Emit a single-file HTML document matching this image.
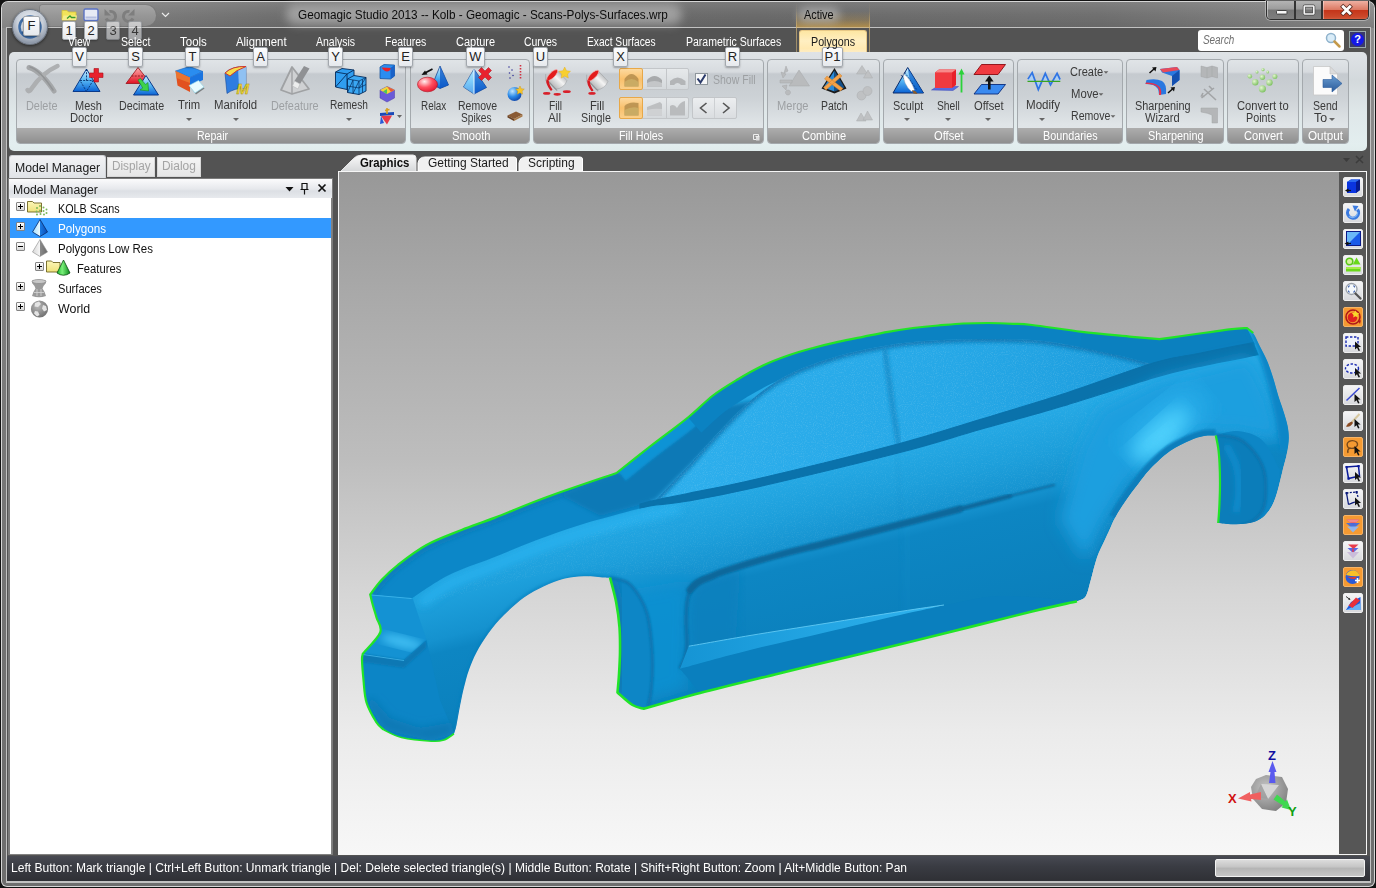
<!DOCTYPE html>
<html><head><meta charset="utf-8"><title>Geomagic Studio 2013</title>
<style>
*{box-sizing:border-box;margin:0;padding:0}
html,body{width:1376px;height:888px;overflow:hidden}
body{position:relative;background:#555;font-family:"Liberation Sans",sans-serif;font-size:12px;color:#222}
.a{position:absolute}
.t{position:absolute;white-space:nowrap;font-size:12px;line-height:14px;height:14px;transform-origin:0 50%}
svg{position:absolute;overflow:visible}
#title{left:298px;top:8px;font-size:12px;line-height:15px;color:#111;white-space:nowrap;letter-spacing:-0.12px}
.menu{top:35px;height:14px;line-height:14px;color:#fff;font-size:12px;white-space:nowrap;letter-spacing:-0.6px;text-align:center;transform:translateX(-50%)}
.grp{top:59px;height:85px;border-radius:4px;border:1px solid #a4a9ad;background:linear-gradient(#e0e4e7 0,#d7dbdf 12px,#c5cacf 14px,#cdd2d6 38px,#dfe4e7 64px,#e5eaec 100%);overflow:hidden}
.gt{position:absolute;left:0;right:0;bottom:0;height:15px;background:linear-gradient(#adadad,#8f8f8f);color:#fff;font-size:12px;text-align:center;line-height:16px;letter-spacing:-0.55px}
.lbl{font-size:11.5px;color:#3c3c3c;text-align:center;white-space:nowrap;line-height:12px;letter-spacing:-0.45px;transform:translateX(-50%)}
.dis{color:#9b9ea1}
.kt{background:linear-gradient(#fdfdfe,#e6e9ed);border:1px solid #a3a8ae;border-radius:2px;color:#222;font-size:13px;text-align:center;line-height:17px;height:20px;width:15px;box-shadow:0 1px 2px rgba(0,0,0,.3)}
.dd{width:0;height:0;border-left:3px solid transparent;border-right:3px solid transparent;border-top:3px solid #666}
.tb{left:1343px;width:20px;height:20px;border-radius:2px;background:linear-gradient(#f4f4f6,#d8d9dd);border:1px solid #eee}
.tb.on{background:#f59a32;border-color:#f7b466}
.tr{left:10px;width:321px;height:20px}
.tr span{position:absolute;top:3px;font-size:12px;letter-spacing:-0.3px;white-space:nowrap;color:#111}
.pm{width:9px;height:9px;border:1px solid #848484;background:linear-gradient(#fff,#d8d8d8);border-radius:1px}
.pm:before{content:"";position:absolute;left:1px;top:3px;width:5px;height:1px;background:#000}
.pm.p:after{content:"";position:absolute;left:3px;top:1px;width:1px;height:5px;background:#000}
</style></head><body>
<!-- window frame -->
<div class="a" style="left:0;top:0;width:1376px;height:888px;background:#121212"></div>
<div class="a" style="left:.8px;top:1.300px;width:1374.400px;height:885.900px;background:#d6d6d6;border-radius:7px 7px 6px 6px"></div>
<div class="a" style="left:2px;top:2.300px;width:1372px;height:883.700px;background:linear-gradient(#8e8e8e 0,#888 150px,#787878 420px,#6e6e6e 800px,#6e6e6e 100%);border-radius:6px 6px 5px 5px"></div>
<!-- title bar -->
<div class="a" style="left:2px;top:2.300px;width:1372px;height:25.700px;border-radius:6px 6px 0 0;background:linear-gradient(90deg,#8e8e8e 0,#7c7c7c 140px,#6e6e6e 300px,#6b6b6b 55%,#707070 80%,#888 100%)"></div>
<div class="a" style="left:2px;top:2.300px;width:1372px;height:25.700px;border-radius:6px 6px 0 0;background:linear-gradient(rgba(255,255,255,.10),rgba(255,255,255,0) 50%,rgba(0,0,0,.08))"></div>
<div class="a" style="left:5.800px;top:27px;width:1365.100px;height:855.500px;background:#c2c2c2"></div>
<div class="a" style="left:6.800px;top:28px;width:1362.900px;height:853.300px;background:#535353"></div>
<!-- title glow -->
<div class="a" style="left:286px;top:4px;width:396px;height:21px;border-radius:10px;background:rgba(200,200,200,.55);filter:blur(5px)"></div>
<!-- quick access toolbar -->
<div class="a" style="left:40px;top:5px;width:116px;height:21px;border-radius:3px 11px 11px 3px;background:linear-gradient(#a6a6a6,#979797 50%,#8b8b8b);box-shadow:0 0 0 1px rgba(120,120,120,.6)"></div>
<!-- QAT icons -->
<svg class="a" style="left:60px;top:6px" width="80" height="20" viewBox="0 0 80 20">
 <path d="M2 4.500h5l1.500 1.500h7.500v8h-14z" fill="#f3e45a" stroke="#d4c23a" stroke-width=".8"/><path d="M2 14l1.500-4.500h13.500l-1 4.500z" fill="#f8ee8a"/><path d="M7 12.500l3-2.500l1.500 1.500h4" fill="none" stroke="#3a9a2a" stroke-width="1.300"/>
 <rect x="24" y="3" width="14" height="11.500" rx="1.500" fill="#e6eaf5" stroke="#5a72c4" stroke-width="1.400"/><rect x="25.500" y="10.500" width="11" height="2" fill="#b4bee0"/>
 <path d="M49.500 5.500a5 5 0 1 1-3.500 7" fill="none" stroke="#7e7e7e" stroke-width="3"/><path d="M44.500 3v6.500h6.500z" fill="#7e7e7e"/>
 <path d="M69.500 5.500a5 5 0 1 0 3.500 7" fill="none" stroke="#7e7e7e" stroke-width="3"/><path d="M74.500 3v6.500h-6.500z" fill="#7e7e7e"/>
</svg>
<svg class="a" style="left:161px;top:12px" width="9" height="6"><path d="M1 1l3.500 3.500L8 1" fill="none" stroke="#ececec" stroke-width="1.200"/></svg>
<!-- app orb -->
<div class="a" style="left:12px;top:9px;width:36px;height:36px;border-radius:50%;background:radial-gradient(circle at 50% 35%,#f4f6f9 0,#c9d0da 45%,#8e98a8 75%,#b9c3d2 100%);border:1px solid #6c7480;box-shadow:0 1px 3px rgba(0,0,0,.5)"></div>
<svg class="a" style="left:15px;top:12px" width="30" height="30" viewBox="0 0 30 30"><circle cx="15" cy="15" r="10.5" fill="none" stroke="#3f6da6" stroke-width="2.5"/><path d="M7 20q8 7 16 0" fill="none" stroke="#2f5d96" stroke-width="2.5"/><circle cx="15" cy="14" r="7" fill="#dfe6ef"/></svg>
<div class="a kt" style="left:23px;top:15.500px;width:17px;height:20px">F</div>
<div class="a kt" style="left:62px;top:21px;width:14px;height:19px">1</div>
<div class="a kt" style="left:84px;top:21px;width:14px;height:19px">2</div>
<div class="a kt" style="left:106px;top:21px;width:14px;height:19px;opacity:.55">3</div>
<div class="a kt" style="left:128px;top:21px;width:14px;height:19px;opacity:.55">4</div>
<!-- window buttons -->
<div class="a" style="left:1266px;top:1px;width:103px;height:19px;border-radius:0 0 5px 5px;border:1px solid #2e2e2e;border-top:none;background:linear-gradient(#b4b4b4 0,#9c9c9c 45%,#757575 50%,#7e7e7e 100%);overflow:hidden;box-shadow:0 0 0 1px rgba(255,255,255,.35)">
 <div class="a" style="left:0;top:0;width:101px;height:19px;border:1px solid rgba(255,255,255,.45);border-top:none;border-radius:0 0 4px 4px"></div>
 <div class="a" style="left:27px;top:0;width:1.500px;height:20px;background:#333"></div>
 <div class="a" style="left:54px;top:0;width:1.500px;height:20px;background:#333"></div>
 <div class="a" style="left:55.500px;top:0;width:47px;height:20px;background:linear-gradient(#eeb0a2 0,#dc7a64 45%,#c5351a 50%,#cc4a2c 85%,#d8684a 100%);border:1px solid rgba(255,255,255,.4);border-top:none"></div>
 <svg class="a" style="left:0;top:0" width="103" height="20" viewBox="0 0 103 20">
  <rect x="9.500" y="9.500" width="10.500" height="3.600" rx=".8" fill="#f6f6f6" stroke="#444" stroke-width="1"/>
  <rect x="37.300" y="5" width="9.500" height="8" rx=".6" fill="none" stroke="#444" stroke-width="3"/><rect x="37.300" y="5" width="9.500" height="8" rx=".6" fill="none" stroke="#f6f6f6" stroke-width="1.700"/>
  <path d="M76.200 5.800L82.800 12.200M82.800 5.800L76.200 12.200" stroke="#5a2a20" stroke-width="4.400" stroke-linecap="square"/><path d="M76.200 5.800L82.800 12.200M82.800 5.800L76.200 12.200" stroke="#fff" stroke-width="2.800" stroke-linecap="square"/>
 </svg>
</div>
<!-- search -->
<div class="a" style="left:1198px;top:30px;width:146px;height:21px;background:#fff;border-radius:3px"></div>
<svg class="a" style="left:1324px;top:31px" width="18" height="18" viewBox="0 0 18 18"><circle cx="7" cy="7" r="4.5" fill="#d9ecf8" stroke="#8fb2cc" stroke-width="1.5"/><path d="M10.5 10.5l5 5" stroke="#c59a4a" stroke-width="2.5" stroke-linecap="round"/></svg>
<div class="a" style="left:1349px;top:31px;width:17px;height:17px;border:1px solid #9aa;background:#3a3a6a"></div>
<div class="a" style="left:1351px;top:33px;width:13px;height:13px;border-radius:50%;background:#1418e8;color:#fff;font-weight:bold;font-size:11px;line-height:13px;text-align:center">?</div>
<!-- menus -->
<!-- contextual tab -->
<div class="a" style="left:796px;top:2px;width:74px;height:50px;background:linear-gradient(rgba(0,0,0,0) 0,rgba(0,0,0,0) 9px,rgba(214,160,60,.25) 18px,rgba(222,166,60,.6) 25px,rgba(0,0,0,0) 26.500px)"></div>
<div class="a" style="left:796px;top:2px;width:1px;height:50px;background:linear-gradient(rgba(210,180,120,0) 0,rgba(210,180,120,.15) 10px,rgba(210,180,120,.7) 26px,rgba(210,180,120,.55) 100%)"></div>
<div class="a" style="left:869px;top:2px;width:1px;height:50px;background:linear-gradient(rgba(210,180,120,0) 0,rgba(210,180,120,.15) 10px,rgba(210,180,120,.7) 26px,rgba(210,180,120,.55) 100%)"></div>
<div class="a" style="left:798px;top:7px;width:42px;height:16px;border-radius:8px;background:rgba(200,200,200,.55);filter:blur(4px)"></div>
<div class="a" style="left:799px;top:30px;width:68px;height:23px;border-radius:3px 3px 0 0;background:linear-gradient(#fde6a2,#ffefc2 45%,#ffe9b2 80%,#fdeec8);border:1px solid #e8c987;border-bottom:none"></div>
<!-- ribbon -->
<div class="a" style="left:9px;top:52px;width:1358px;height:99px;border-radius:5px;background:linear-gradient(#dfe3e6 0,#dce0e4 8px,#d3d9dc 28px,#dfe7e9 60px,#e3eeef 92px,#e0ecec 100%)"></div>
<div class="a grp" style="left:16px;width:390px"><div class="gt"></div></div>
<div class="a grp" style="left:410px;width:120px"><div class="gt"></div></div>
<div class="a grp" style="left:533px;width:231px"><div class="gt"></div></div>
<div class="a grp" style="left:767px;width:113px"><div class="gt"></div></div>
<div class="a grp" style="left:883px;width:131px"><div class="gt"></div></div>
<div class="a grp" style="left:1017px;width:106px"><div class="gt"></div></div>
<div class="a grp" style="left:1126px;width:98px"><div class="gt"></div></div>
<div class="a grp" style="left:1227px;width:72px"><div class="gt"></div></div>
<div class="a grp" style="left:1302px;width:47px"><div class="gt"></div></div>
<!-- labels -->



<div class="a dd" style="left:186px;top:118px"></div>
<div class="a dd" style="left:233px;top:118px"></div>

<div class="a dd" style="left:346px;top:118px"></div>







<div class="a dd" style="left:904px;top:118px"></div>
<div class="a dd" style="left:945px;top:118px"></div>
<div class="a dd" style="left:985px;top:118px"></div>
<div class="a dd" style="left:1039px;top:118px"></div>
<div class="a dd" style="left:1103px;top:71px;transform:scale(.8)"></div>
<div class="a dd" style="left:1098px;top:93px;transform:scale(.8)"></div>
<div class="a dd" style="left:1110px;top:115px;transform:scale(.8)"></div>


<div class="a dd" style="left:1329px;top:118px"></div>
<!-- fill-holes toggles -->
<div class="a" style="left:619px;top:68px;width:70px;height:22px;border:1px solid #c3c6c9;border-radius:2px;background:linear-gradient(#e6e9eb,#d5d9dc)"></div>
<div class="a" style="left:619px;top:68px;width:24px;height:22px;border:1px solid #e8a848;border-radius:2px;background:linear-gradient(#fcd9a0,#f9c06c 50%,#fbd08a)"></div>
<div class="a" style="left:666px;top:69px;width:1px;height:20px;background:#c3c6c9"></div>
<div class="a" style="left:619px;top:97px;width:70px;height:22px;border:1px solid #c3c6c9;border-radius:2px;background:linear-gradient(#e6e9eb,#d5d9dc)"></div>
<div class="a" style="left:619px;top:97px;width:24px;height:22px;border:1px solid #e8a848;border-radius:2px;background:linear-gradient(#fcd9a0,#f9c06c 50%,#fbd08a)"></div>
<div class="a" style="left:666px;top:98px;width:1px;height:20px;background:#c3c6c9"></div>
<div class="a" style="left:692px;top:97px;width:45px;height:22px;border:1px solid #c3c6c9;border-radius:2px;background:linear-gradient(#eceef0,#dadde0)"></div>
<div class="a" style="left:714px;top:98px;width:1px;height:20px;background:#cdd0d3"></div>
<div class="a" style="left:695px;top:73px;width:13px;height:12px;border:1px solid #8e969c;background:#f6f7f8"></div>
<svg class="a" style="left:0;top:0" width="1376" height="152" viewBox="0 0 1376 152">
<defs>
<linearGradient id="bt" x1="0" y1="0" x2="0" y2="1"><stop offset="0" stop-color="#d4f0ff"/><stop offset=".5" stop-color="#58b8f4"/><stop offset="1" stop-color="#0a62d4"/></linearGradient>
<linearGradient id="rd" x1="0" y1="0" x2="0" y2="1"><stop offset="0" stop-color="#ffb0b0"/><stop offset="1" stop-color="#e01020"/></linearGradient>
<linearGradient id="gy" x1="0" y1="0" x2="0" y2="1"><stop offset="0" stop-color="#d0d2d4"/><stop offset="1" stop-color="#a2a5a8"/></linearGradient>
<linearGradient id="bk" x1="0" y1="1" x2="1" y2="0"><stop offset="0" stop-color="#8e9092"/><stop offset=".22" stop-color="#b4b6b8"/><stop offset=".55" stop-color="#f4f4f4"/><stop offset=".8" stop-color="#b0b2b4"/><stop offset="1" stop-color="#7e8082"/></linearGradient>
<radialGradient id="gd" cx=".35" cy=".35" r=".7"><stop offset="0" stop-color="#e4f6d0"/><stop offset="1" stop-color="#7cc060"/></radialGradient>
<radialGradient id="rdr" cx=".35" cy=".3" r=".8"><stop offset="0" stop-color="#fff0f0"/><stop offset=".5" stop-color="#ff5060"/><stop offset="1" stop-color="#e0102a"/></radialGradient>
<radialGradient id="bsph" cx=".35" cy=".3" r=".8"><stop offset="0" stop-color="#bfe6ff"/><stop offset=".5" stop-color="#2a8ae8"/><stop offset="1" stop-color="#0a3aa0"/></radialGradient>
<linearGradient id="arb" x1="0" y1="0" x2="0" y2="1"><stop offset="0" stop-color="#6a9ed2"/><stop offset="1" stop-color="#2a5a9a"/></linearGradient>
</defs>
<!-- Delete -->
<g fill="none" stroke-linecap="round" opacity=".95">
<path d="M29 67.500Q41 71 54 91" stroke="#a3a5a7" stroke-width="5"/>
<path d="M57.500 66Q42 73 32 88Q29 93 27.500 90" stroke="#acaeb0" stroke-width="4.500"/>
<path d="M30 67Q40 70 53 90" stroke="#8f9193" stroke-width="1.500"/>
</g>
<!-- Mesh Doctor -->
<path d="M86.500 69L100 91.500L73 91.500Z" fill="url(#bt)" stroke="#0a3a8a" stroke-width="1"/>
<path d="M80 80.500L93 80.500L86.500 91.500ZM86.500 69L86.500 80.500" fill="none" stroke="#08306e" stroke-width=".9" stroke-dasharray="2 1.2"/>
<path d="M94 68.500h4.500v4.500h4.500v4.500h-4.500v4.500h-4.500v-4.500h-4.500v-4.500h4.500z" fill="#e8212e" stroke="#a80f18" stroke-width=".6"/>
<!-- Decimate -->
<path d="M138 67.500L150.500 83.500L126 83.500Z" fill="url(#rd)" stroke="#9a1018" stroke-width=".8"/>
<path d="M131.500 76h13" stroke="#7a0a10" stroke-width=".8" stroke-dasharray="2 1.200"/>
<path d="M146 75.500L158.500 95L133.500 95Z" fill="url(#bt)" stroke="#0a3a8a" stroke-width="1"/>
<path d="M138 80l2.500-1.500l5 6l2.500-2l.5 8.500l-8.500-1l2.700-2z" fill="#3ed24a" stroke="#1c8a26" stroke-width=".6"/>
<!-- Trim -->
<path d="M175.500 71L189.500 66.500L203 71.500L190 77.500Z" fill="#2a8df0" stroke="#1560b8" stroke-width=".6"/>
<path d="M175.500 71L190 77.500L190 92L177.500 85.500Z" fill="#e2511f"/>
<path d="M175.500 71L190 77.500L190 83L176.500 78Z" fill="#f08a3a" opacity=".6"/>
<path d="M190 77.500L203 71.500L203 80L190 86Z" fill="#1a74e0"/>
<path d="M190 86L199 81.500L204.500 88.500L196 94.500Z" fill="#3a3a3a" opacity=".55"/>
<path d="M189 85.500L198.500 80.500L204 87L195 93Z" fill="#e8fbff" stroke="#8fd6ea" stroke-width=".6"/>
<!-- Manifold -->
<path d="M225 73Q232 66 246 66.500L246 88Q234 88 227 93.500Z" fill="#2f7de0" stroke="#164a9a" stroke-width=".6"/>
<path d="M238 67L246 66.500L246 88L239 88.500Z" fill="#a9d2f6" opacity=".8"/>
<path d="M225 73Q232 66 246 66.500Q236 70 230 76Z" fill="#f7dc4a" stroke="#d63a2a" stroke-width="1"/>
<text x="236.500" y="94" font-family="Liberation Sans,sans-serif" font-size="15" font-weight="bold" font-style="italic" fill="#f2dc3a" stroke="#a58a10" stroke-width=".5">M</text>
<!-- Defeature -->
<path d="M292 67L281 90L292 94L309 89Z" fill="#cfd1d3" stroke="#a0a2a4" stroke-width="1.800" stroke-linejoin="round"/>
<path d="M292 67L292 94" stroke="#a0a2a4" stroke-width="1.400"/>
<path d="M304 66L309.500 68.500L300 84L294.500 81Z" fill="#8f9194"/>
<path d="M294.500 81L300 84L298 89L292.500 86Z" fill="#eceded" stroke="#b5b7b9" stroke-width=".6"/>
<!-- Remesh -->
<g stroke="#052a5a" stroke-width=".9" fill="#2f9df0">
<path d="M335.500 72L342 68.500L354 70L354 86L347 89.500L335.500 87Z"/>
<path d="M335.500 72L347 74L354 70M347 74L347 89.500M335.500 87L347 74" fill="none"/>
<path d="M347.500 79L354 75.500L366 77.500L366 91L359 94.500L347.500 92.500Z" fill="#3aa8f4"/>
<path d="M347.500 79L359 81L366 77.500M359 81L359 94.500M347.500 86L359 88L366 84.500M353 80L353 93.500M362.500 79.500L362.500 92.800M347.500 92.500L353 80M353 93.500L359 81M359 88L366 77.500" fill="none" stroke-width=".7"/>
</g>
<!-- Repair small icons -->
<path d="M380 67L384 64.500L394.500 65L394.500 76L390.500 79L380 78.500Z" fill="#2a8df0" stroke="#0c4a9a" stroke-width=".7"/>
<path d="M381.500 67.500L392 68Q387 75 381.500 67.500Z" fill="#e8202a"/>
<path d="M390.500 68L394.500 65L394.500 76L390.500 79Z" fill="#1a62c8"/>
<path d="M380 90L387 86.500L394.500 90L394.500 98L387 102L380 98Z" fill="#6a5ad8" stroke="#4a3aa8" stroke-width=".5"/>
<path d="M387 86.500L394.500 90L387 94L380 90Z" fill="#f4d23a"/><path d="M387 86.500L394.500 90L391 92Z" fill="#e85a3a"/><path d="M383 91.500L387 94L387 89Z" fill="#4ac85a"/>
<path d="M380 113L394 112L394 115L380 116Z" fill="#1a4ab8"/><path d="M381 116L392 115.500L387 124.500Z" fill="#e83a4a"/><path d="M381 116L384 123L380 124Z" fill="#2a5ad8"/>
<path d="M387 108L387 114M385 110.500L389.500 109.500" stroke="#d6a020" stroke-width="1.600"/><path d="M397 115h5l-2.500 3z" fill="#666"/>
<!-- Relax -->
<path d="M440 66L448.500 85L440 88.500L432.500 84.500Z" fill="url(#bt)" stroke="#0a3a8a" stroke-width=".7"/>
<path d="M440 66L440 88.500L448.500 85Z" fill="#0d55c4" opacity=".75"/>
<ellipse cx="427.500" cy="84.500" rx="10" ry="7.300" fill="url(#rdr)" stroke="#b01020" stroke-width=".6"/>
<path d="M432.500 69L424 73.500" stroke="#111" stroke-width="1.800"/><path d="M421.500 75L427.500 74.500L425 70.500Z" fill="#111"/>
<!-- Remove spikes -->
<path d="M474 69L486.500 87.500L474 94L463.500 87Z" fill="url(#bt)" stroke="#0a3a8a" stroke-width=".7"/>
<path d="M474 69L474 94L463.500 87Z" fill="#9adcff" opacity=".55"/><path d="M474 69L486.500 87.500L474 94Z" fill="#0d55c4" opacity=".65"/><path d="M474 69L474 94" stroke="#e8f8ff" stroke-width="1"/>
<path d="M480 70l3-3l3.500 3.500l3.500-3.500l3 3l-3.500 3.500l3.500 3.500l-3 3l-3.500-3.500l-3.500 3.500l-3-3l3.500-3.500z" fill="#e8212e" stroke="#a80f18" stroke-width=".5" transform="translate(-1.500 .5)"/>
<!-- Smooth small icons -->
<g fill="#3a3a9a"><circle cx="509" cy="67" r=".8"/><circle cx="512" cy="70" r=".8"/><circle cx="509.500" cy="73" r=".8"/><circle cx="513" cy="75.500" r=".8"/><circle cx="510" cy="78" r=".8"/></g>
<path d="M520.500 65v14" stroke="#d03040" stroke-width="1.600" stroke-dasharray="1.600 1.400"/>
<circle cx="514.500" cy="94" r="7" fill="url(#bsph)"/><path d="M520 86l1.300 2.700l3 .4l-2.200 2.100l.5 3l-2.600-1.400l-2.700 1.400l.5-3l-2.100-2.100l2.900-.4z" fill="#f5c52a" stroke="#c8901a" stroke-width=".4"/>
<path d="M507.500 115.500L516 111.500L522.500 114.500L514 119Z" fill="#8a5a34"/><path d="M507.500 115.500L514 119L514 121L507.500 117.500Z" fill="#6a4224"/><path d="M514 119L522.500 114.500L522.500 116.500L514 121Z" fill="#a87a4a"/>
<!-- Fill All -->
<g transform="translate(552.2 75.1)">
<path d="M-5.500 4.900L3.200 14.200Q11.500 13.500 14.800 5.600L4.900 -4.900Z" fill="url(#bk)" stroke="#8e9092" stroke-width=".4"/>
<path d="M-3.500 6.500L5 15.500" stroke="#6e7072" stroke-width="1.200" opacity=".5"/>
<ellipse cx="0" cy="0" rx="7.300" ry="2.700" transform="rotate(-45)" fill="#e31c1c" stroke="#f4b0b0" stroke-width=".7"/>
<path d="M-5.800 4.300Q-7 8 -1.800 15.500Q0 15.800 .3 14.500Q-3.500 9 -3.300 5.500Z" fill="#d41a22"/>
<path d="M-6.500 -1L-6.500 6" stroke="#9a9c9e" stroke-width=".6"/>
</g>
<ellipse cx="546.700" cy="93.400" rx="3.700" ry="1.400" fill="#d8202a"/><ellipse cx="557.200" cy="94.300" rx="3.700" ry="1.400" fill="#d8202a"/><ellipse cx="566.800" cy="91.700" rx="4" ry="1.400" fill="#d8202a"/>
<path d="M564.700 67l1.800 3.700l4 .6l-2.900 2.800l.7 4l-3.600-1.900l-3.600 1.900l.7-4l-2.900-2.800l4-.6z" fill="#f8cf2e" stroke="#e0a81a" stroke-width=".4"/>
<g transform="translate(593.2 75.7)">
<path d="M-5.500 4.900L3.200 14.200Q11.500 13.500 14.800 5.600L4.900 -4.900Z" fill="url(#bk)" stroke="#8e9092" stroke-width=".4"/>
<path d="M-3.500 6.500L5 15.500" stroke="#6e7072" stroke-width="1.200" opacity=".5"/>
<ellipse cx="0" cy="0" rx="7.300" ry="2.700" transform="rotate(-45)" fill="#e31c1c" stroke="#f4b0b0" stroke-width=".7"/>
<path d="M-5.800 4.300Q-7 8 -1.800 15.500Q0 15.800 .3 14.500Q-3.500 9 -3.300 5.500Z" fill="#d41a22"/>
<path d="M-6.500 -1L-6.500 6" stroke="#9a9c9e" stroke-width=".6"/>
</g>
<ellipse cx="592" cy="93.400" rx="3.700" ry="1.400" fill="#d8202a"/>
<!-- toggle icons -->
<path d="M624.500 86.500V79Q631.500 69 638.500 79V86.500Z" fill="#b08a4a" opacity=".8"/><path d="M624.500 86.500V82Q631.500 76 638.500 82V86.500Z" fill="#cdb068" opacity=".8"/>
<path d="M647 86.500V80Q654.500 72 662 80V86.500Z" fill="#a8aaac"/><path d="M647 86.500V83Q654.500 79 662 83V86.500Z" fill="#c4c6c8"/>
<path d="M670 85V81Q677.500 74 685.500 81V85H681Q677.500 81 674 85Z" fill="#b3b5b7"/>
<path d="M624.500 115.500V106Q629 101 638.500 103V115.500Z" fill="#b08a4a" opacity=".8"/><path d="M624.500 115.500V110Q632 106 638.500 108V115.500Z" fill="#cdb068" opacity=".8"/>
<path d="M647 115.500V107L660 102L662 104V115.500Z" fill="#bdbfc1"/><path d="M647 115.500V110Q654 108 662 109V115.500Z" fill="#cfd1d3"/>
<path d="M670 115.500V106Q674 103 677 108Q680 102 685 101V115.500Z" fill="#b9bbbd"/>
<path d="M697.500 78.500L700.500 82.500L705.500 74.500" fill="none" stroke="#2a3a6a" stroke-width="2"/>
<path d="M706.500 103L700.500 108L706.500 113" fill="none" stroke="#555" stroke-width="1.600"/><path d="M723 103L729 108L723 113" fill="none" stroke="#555" stroke-width="1.600"/>
<path d="M753.500 134.500h5v5h-5zM755.500 136.500h4" fill="none" stroke="#eee" stroke-width="1"/><path d="M756 137h3.500v3.500h-3.500z" fill="#ddd"/>
<!-- Merge (gray) -->
<g fill="#b9bbbd" stroke="#a6a8aa" stroke-width=".5"><path d="M799 70L809.500 86L789 86Z"/><path d="M780 80h12v3h-12z"/><path d="M786 66l2 5l-4 2zM781 72l5 2l-3 4zM782 86l5-1l-1 5zM788 90a2.500 2.500 0 1 1-.1 0"/></g>
<!-- Patch -->
<path d="M834.500 68L846.500 88.500L834.500 93.500L821.500 88.500Z" fill="#1a1a1a"/>
<path d="M834.500 70.500L834.500 91.500L823.500 87.500Z" fill="#2a8ad8"/><path d="M834.500 70.500L844.500 87.500L834.500 91.500Z" fill="#14508a"/>
<path d="M827 76L843 88.500L840.500 91L824.500 79ZM842 76L826 90L823.500 87.500L839.500 73.500Z" fill="#f4a24a" stroke="#c87820" stroke-width=".4"/>
<!-- Combine small gray -->
<g fill="#bfc1c3" stroke="#aaacae" stroke-width=".5"><path d="M862 65.500L867.500 74L856.500 74Z"/><path d="M868 70L872.500 78L863.500 78Z"/><circle cx="861.500" cy="95.500" r="4.500"/><circle cx="867.500" cy="91" r="4.500"/><path d="M861 113L866 121L856.500 121Z"/><path d="M867.500 111L872.500 120L863 120Z"/></g>
<!-- Sculpt -->
<path d="M907.700 67.500L923.500 93L893 93Z" fill="url(#bt)" stroke="#0a2a6a" stroke-width="1"/>
<path d="M907.700 67.500L923.500 93L912 93Z" fill="#0d60c8" opacity=".7"/>
<path d="M901 75L913 91M904.500 72L917 90" stroke="#0a2a6a" stroke-width=".7" stroke-dasharray="2 1.200" fill="none"/>
<path d="M903.500 74Q910 78 914.500 90L911.500 91.500Q903 84 903.500 74Z" fill="#fff" stroke="#99a" stroke-width=".4"/><path d="M912 90l4 1.500l1.500 2.500l-4-.5z" fill="#8a5a2a"/>
<!-- Shell -->
<path d="M931.500 90L937 86.500L958.500 86.500L953 90.500Z" fill="#5a6ae0" stroke="#3a4ab8" stroke-width=".5"/>
<path d="M935 72.500L939 69.500L956 69.500L956 85L952 88L935 88Z" fill="#e8202a"/><path d="M935 72.500L952 72.500L952 88L935 88Z" fill="#f03a40"/><path d="M935 72.500L939 69.500L956 69.500L952 72.500Z" fill="#f88a8a"/>
<path d="M961.500 92.500V73" stroke="#2ad23a" stroke-width="1.800"/><path d="M958.500 74.500L961.500 68.500L964.500 74.500Z" fill="#2ad23a"/>
<!-- Offset -->
<path d="M981.500 64.500L1005.500 64.500L998 74.500L974 74.500Z" fill="#f03a40" stroke="#8a0a10" stroke-width=".9"/>
<path d="M981.500 84.500L1005.500 84.500L998 94L974 94Z" fill="#3a8af0" stroke="#0a2a7a" stroke-width=".9"/>
<path d="M989.300 89.500V80" stroke="#111" stroke-width="2.600"/><path d="M985 81.500L989.300 75.500L993.600 81.500Z" fill="#111"/>
<!-- Modify -->
<path d="M1027.900 79.100L1032.200 72.600L1038.300 89.600L1045.300 73.400L1050.500 84.800L1057.100 73.400L1060.100 79.500L1060.100 81.300L1027.900 81.300Z" fill="#a8d0fa" opacity=".8"/>
<path d="M1027.900 79.100L1032.200 72.600L1038.300 89.600L1045.300 73.400L1050.500 84.800L1057.100 73.400L1060.100 79.500" fill="none" stroke="#2f74e4" stroke-width="1.700" stroke-linejoin="miter"/>
<path d="M1027.500 81.300h32.800" stroke="#3aa41e" stroke-width="1.300"/>
<!-- Sharpening wizard -->
<path d="M1160 69L1177 67L1179.500 70L1179.500 80L1172 86L1172 76L1162 72.500Z" fill="#2a78e0"/><path d="M1160 69L1177 67L1179.500 70L1163 72.500Z" fill="#e84a5a"/><path d="M1172 76L1179.500 70L1179.500 80L1172 86Z" fill="#1450b0"/>
<path d="M1146.500 80Q1156 78 1162 81Q1167 84 1166 94L1159 95Q1159 87 1153 85Q1149 84 1145.500 84Z" fill="#2a78e0"/><path d="M1145.500 84Q1153 83.500 1157 86.500Q1160 89 1159 95L1161 95Q1162 88 1158 85.500Q1154 82.500 1146 82.500Z" fill="#e8304a"/>
<path d="M1149.500 73L1154 69" stroke="#111" stroke-width="1.500"/><path d="M1152 67.500L1156.500 67L1155.500 71.500Z" fill="#111"/>
<path d="M1168 93L1172.500 89" stroke="#111" stroke-width="1.500"/><path d="M1170.500 87.500L1175 87L1174 91.500Z" fill="#111"/>
<!-- Sharpening small gray -->
<g fill="#b4b6b8" stroke="#a2a4a6" stroke-width=".5"><path d="M1201 66L1207 67.500L1212 66L1217.500 67.500L1217.500 78L1212 76.500L1207 78L1201 76.500Z"/><path d="M1207 67.500V78M1212 66V76.500" fill="none"/>
<path d="M1201.500 98L1214 88M1204 89L1216 100M1209 86l3 3M1203 93l-1.500 3l3 .5" fill="none" stroke-width="1.600"/>
<path d="M1201 108L1217.500 108L1217.500 123L1212 123L1212 115Q1208 113 1201 112Z"/></g>
<!-- Convert to points -->
<g fill="url(#gd)"><circle cx="1249.800" cy="76.300" r="2.300"/><circle cx="1262.400" cy="77.200" r="2.700"/><circle cx="1274.900" cy="76.500" r="2.500"/><circle cx="1255.200" cy="82.200" r="3.200"/><circle cx="1269.500" cy="82.500" r="3.200"/><circle cx="1262.400" cy="88.800" r="3.600"/><circle cx="1257" cy="72.100" r="1.500"/><circle cx="1263" cy="69.700" r="1.600"/><circle cx="1267.700" cy="72.100" r="1.500"/></g>
<!-- Send To -->
<path d="M1313.500 66.500L1330 66.500L1337.500 74L1337.500 95L1313.500 95Z" fill="#fbfbfb" stroke="#c8c8c8" stroke-width=".8"/><path d="M1330 66.500L1330 74L1337.500 74Z" fill="#dcdcdc" stroke="#c0c0c0" stroke-width=".6"/>
<path d="M1323 79.500L1332 79.500L1332 75L1342 83.500L1332 92L1332 87.500L1323 87.500Z" fill="url(#arb)" stroke="#2a5a9a" stroke-width=".6"/>

</svg>
<!-- keytips -->
<div class="a kt" style="left:72px;top:47px">V</div>
<div class="a kt" style="left:128px;top:47px">S</div>
<div class="a kt" style="left:185px;top:47px">T</div>
<div class="a kt" style="left:253px;top:47px">A</div>
<div class="a kt" style="left:328px;top:47px">Y</div>
<div class="a kt" style="left:398px;top:47px">E</div>
<div class="a kt" style="left:466px;top:47px;width:19px">W</div>
<div class="a kt" style="left:533px;top:47px">U</div>
<div class="a kt" style="left:613px;top:47px">X</div>
<div class="a kt" style="left:725px;top:47px">R</div>
<div class="a kt" style="left:822px;top:47px;width:21px">P1</div>
<!-- left panel tabs -->
<div class="a" style="left:9px;top:155px;width:97px;height:24px;border-radius:3px 3px 0 0;background:linear-gradient(#f2f3f5,#dfe2e6);border:1px solid #cfd2d6;border-bottom:none"></div>
<div class="a" style="left:107px;top:157px;width:48px;height:20px;border:1px solid #d8d8d8;background:linear-gradient(#f4f4f4,#e6e6e6)"></div>
<div class="a" style="left:157px;top:157px;width:44px;height:20px;border:1px solid #d8d8d8;background:linear-gradient(#f4f4f4,#e6e6e6)"></div>
<!-- model manager -->
<div class="a" style="left:8px;top:178px;width:325px;height:677px;background:#7c7c7c"></div>
<div class="a" style="left:9px;top:179px;width:323px;height:20px;background:linear-gradient(#fbfbfc,#e6e8ec 50%,#dcdfe4 60%,#e9ebef)"></div>
<svg class="a" style="left:284px;top:182px" width="46" height="14" viewBox="0 0 46 14"><path d="M1.5 5h8l-4 4.5z" fill="#111"/><path d="M18 1.5h5v6h-5zM16.5 7.5h8M20.5 7.5v5" stroke="#111" stroke-width="1.2" fill="none"/><path d="M34.500 2.500l7 7m0-7l-7 7" stroke="#111" stroke-width="1.7"/></svg>
<div class="a" style="left:9.500px;top:197.500px;width:322px;height:657px;background:#828282"></div><div class="a" style="left:10.300px;top:198.300px;width:320.700px;height:655.700px;background:#fff"></div>
<div class="a" style="left:10px;top:218px;width:321px;height:20px;background:#3399ff"></div>
<div class="a tr" style="top:198px"><div class="a pm p" style="left:6px;top:4px"></div></div>
<div class="a tr" style="top:218px"><div class="a pm p" style="left:6px;top:4px"></div></div>
<div class="a tr" style="top:238px"><div class="a pm" style="left:6px;top:4px"></div></div>
<div class="a tr" style="top:258px"><div class="a pm p" style="left:25px;top:4px"></div></div>
<div class="a tr" style="top:278px"><div class="a pm p" style="left:6px;top:4px"></div></div>
<div class="a tr" style="top:298px"><div class="a pm p" style="left:6px;top:4px"></div></div>
<svg class="a" style="left:0;top:198px" width="340" height="130" viewBox="0 198 340 130">
<defs>
<linearGradient id="fy" x1="0" y1="0" x2="0" y2="1"><stop offset="0" stop-color="#fbf6b8"/><stop offset="1" stop-color="#efe27a"/></linearGradient>
<linearGradient id="pb" x1="0" y1="0" x2="1" y2="0"><stop offset="0" stop-color="#9fdcff"/><stop offset=".48" stop-color="#e8f8ff"/><stop offset=".52" stop-color="#1a7ae0"/><stop offset="1" stop-color="#0a4ab8"/></linearGradient>
<linearGradient id="pg" x1="0" y1="0" x2="1" y2="0"><stop offset="0" stop-color="#d8d8d8"/><stop offset=".48" stop-color="#f4f4f4"/><stop offset=".52" stop-color="#8a8a8a"/><stop offset="1" stop-color="#6a6a6a"/></linearGradient>
<linearGradient id="cg" x1="0" y1="0" x2="1" y2="0"><stop offset="0" stop-color="#1ab82a"/><stop offset=".4" stop-color="#7af07a"/><stop offset="1" stop-color="#0a8a1a"/></linearGradient>
<radialGradient id="wg" cx=".4" cy=".35" r=".7"><stop offset="0" stop-color="#b8b8b8"/><stop offset="1" stop-color="#6e6e6e"/></radialGradient>
</defs>
<!-- folder + dots -->
<path d="M27.500 201.500h5l1.500 1.500h7.500v9h-14z" fill="url(#fy)" stroke="#6e6420" stroke-width=".9"/>
<g fill="#7ab85a"><circle cx="37" cy="208" r="1"/><circle cx="40" cy="206" r="1"/><circle cx="43.500" cy="207.500" r="1"/><circle cx="36.500" cy="211.500" r="1"/><circle cx="40" cy="210.500" r="1"/><circle cx="43.500" cy="211" r="1"/><circle cx="37" cy="214.500" r="1"/><circle cx="40.500" cy="214" r="1"/><circle cx="44" cy="214.500" r="1"/><circle cx="46.500" cy="209.500" r="1"/><circle cx="46.500" cy="213" r="1"/></g>
<!-- blue pyramid -->
<path d="M40 219.500L47.500 232L40 236.500L32.500 232Z" fill="url(#pb)" stroke="#082a6a" stroke-width=".8"/>
<!-- gray pyramid -->
<path d="M40 239.500L47.500 252L40 256.500L32.500 252Z" fill="url(#pg)" stroke="#8a8a8a" stroke-width=".6"/>
<!-- folder + cone -->
<path d="M46.500 261h5l1.500 1.500h7v9.500h-13.500z" fill="url(#fy)" stroke="#6e6420" stroke-width=".9"/>
<path d="M63.500 260L70 273Q63.500 277.500 57 273Z" fill="url(#cg)" stroke="#064a0e" stroke-width=".8"/>
<!-- surfaces -->
<path d="M32 280.500Q39 278.500 46 280.500L46 283Q43 286 42.500 288.500Q44.500 291 46 296Q39 298.500 32 296Q33.500 291 35.500 288.500Q35 286 32 283Z" fill="#9a9a9a"/>
<ellipse cx="39" cy="281.500" rx="7" ry="2" fill="#c8c8c8" stroke="#7a7a7a" stroke-width=".5"/>
<path d="M34 292.500h10M37 289v7M41 289v7" stroke="#d8d8d8" stroke-width=".8"/>
<!-- world -->
<circle cx="39.500" cy="309" r="8.600" fill="url(#wg)"/>
<path d="M35 303l4-1.500l2 2.500l-3 3l-3.500-.5zM43 305l3 1l1 4l-3 1.500l-2-3zM35 311l3 .5l1.500 3.500l-2.500 1.500l-3-3z" fill="#e4e4e4"/>

</svg>
<!-- doc tabs -->
<svg class="a" style="left:338px;top:152px" width="260" height="22" viewBox="338 152 260 22">
<defs><linearGradient id="tg" x1="0" y1="0" x2="0" y2="1"><stop offset="0" stop-color="#fafafa"/><stop offset="1" stop-color="#d4d6d8"/></linearGradient></defs>
<path d="M340 172 L352 160 Q356 155 362 155 H413 Q416 155 416 158 V172z" fill="url(#tg)" stroke="#e8e8e8" stroke-width="1"/>
<path d="M418 171 V163 Q419 157 425 157 H514 Q516.500 157 516.500 159 V171z" fill="#f0f0f0" stroke="#fff" stroke-width="1"/>
<path d="M519 171 V163 Q520 157 526 157 H580 Q582.500 157 582.500 159 V171z" fill="#f0f0f0" stroke="#fff" stroke-width="1"/>
</svg>
<svg class="a" style="left:1342px;top:155px" width="24" height="10" viewBox="0 0 24 10"><path d="M1 3h7l-3.500 4z" fill="#3c3c3c"/><path d="M14 1l7 7m0-7l-7 7" stroke="#3c3c3c" stroke-width="1.5"/></svg>
<!-- graphics view -->
<div class="a" style="left:338px;top:171px;width:1029.400px;height:684.200px;background:#f6f6f6"></div>
<div class="a" style="left:339px;top:172px;width:1001px;height:681.700px;background:linear-gradient(#989898 0,#a9a9a9 18%,#bdbdbd 42%,#d6d6d6 62%,#ebebeb 82%,#f7f7f7 100%)"></div>
<div class="a" style="left:1339.400px;top:172px;width:26.500px;height:681.700px;background:#565656"></div>

<svg class="a" style="left:0;top:0" width="1376" height="888" viewBox="0 0 1376 888">
<defs>
<clipPath id="cb"><path d="M370.2 594.5C372.1 592.1 376.9 584.9 381.5 580.0C386.1 575.1 390.2 570.8 397.8 565.0C405.2 559.2 415.9 550.8 426.5 545.0C437.1 539.2 450.1 534.6 461.5 530.0C472.9 525.4 480.8 523.1 495.0 517.6C509.2 512.1 526.8 504.4 547.0 497.0C567.2 489.6 604.9 477.0 616.5 473.0C622.1 468.6 638.1 455.8 650.0 446.5C661.9 437.2 677.5 426.0 688.0 417.5C698.5 409.0 704.7 401.9 713.0 395.5C721.3 389.1 729.7 384.2 738.0 379.2C746.3 374.2 754.7 369.5 763.0 365.5C771.3 361.5 779.7 358.4 788.0 355.5C796.3 352.6 804.7 350.3 813.0 348.0C821.3 345.7 829.7 343.6 838.0 341.8C846.3 339.9 854.7 338.4 863.0 336.8C871.3 335.1 879.7 333.2 888.0 331.8C896.3 330.3 904.7 329.0 913.0 328.0C921.3 327.0 929.7 326.2 938.0 325.5C946.3 324.8 954.7 323.9 963.0 323.5C971.3 323.1 979.7 323.0 988.0 323.0C996.3 323.0 1005.7 323.4 1013.0 323.8C1020.3 324.1 1020.5 323.7 1032.0 325.0C1043.5 326.3 1065.3 329.8 1082.0 331.8C1098.7 333.7 1119.1 335.5 1132.0 336.8C1144.9 338.0 1154.9 338.8 1159.5 339.2C1163.2 338.7 1174.1 337.1 1182.0 336.0C1189.9 334.9 1198.7 333.6 1207.0 332.5C1215.3 331.4 1225.3 330.0 1232.0 329.2C1238.7 328.5 1244.5 328.2 1247.0 328.0C1248.0 328.8 1251.2 330.1 1253.2 333.0C1255.3 335.9 1257.2 340.9 1259.5 345.5C1261.8 350.1 1264.7 355.1 1267.0 360.5C1269.3 365.9 1271.4 372.2 1273.2 378.0C1275.1 383.8 1276.6 390.1 1278.2 395.5C1279.9 400.9 1281.7 405.5 1283.2 410.5C1284.8 415.5 1286.6 420.9 1287.5 425.5C1288.4 430.1 1288.8 433.4 1288.8 438.0C1288.7 442.6 1287.9 448.0 1287.0 453.0C1286.1 458.0 1284.7 462.2 1283.2 468.0C1281.8 473.8 1280.1 481.8 1278.2 488.0C1276.4 494.2 1274.7 500.5 1272.0 505.5C1269.3 510.5 1265.8 515.1 1262.0 518.0C1258.2 520.9 1254.5 522.0 1249.5 523.0C1244.5 524.0 1237.2 524.2 1232.0 524.2C1226.8 524.2 1220.5 523.2 1218.2 523.0C1218.5 519.7 1219.2 509.7 1219.5 503.0C1219.8 496.3 1220.0 489.7 1220.0 483.0C1220.0 476.3 1219.8 468.8 1219.5 463.0C1219.2 457.2 1218.9 452.6 1218.2 448.0C1217.6 443.4 1216.2 437.6 1215.8 435.5C1213.8 435.6 1208.3 435.2 1204.0 436.0C1199.7 436.8 1195.7 438.0 1190.0 440.5C1184.3 443.0 1176.7 446.2 1170.0 451.0C1163.3 455.8 1155.3 463.5 1150.0 469.0C1144.7 474.5 1141.4 479.7 1138.0 484.0C1134.6 488.3 1132.3 491.3 1129.6 495.0C1126.9 498.7 1124.5 502.1 1122.0 506.0C1119.5 509.9 1116.8 514.2 1114.7 518.2C1112.6 522.2 1111.1 526.4 1109.4 530.0C1107.8 533.6 1106.9 535.4 1104.8 540.0C1102.7 544.6 1099.3 550.8 1097.0 557.5C1094.7 564.2 1092.6 573.5 1090.8 580.0C1088.9 586.5 1088.0 592.7 1085.8 596.2C1083.5 599.8 1078.5 600.4 1077.0 601.2C1069.5 603.0 1054.2 606.1 1032.0 611.5C1009.8 616.9 974.3 626.0 944.0 633.5C913.7 641.0 878.2 649.7 850.0 656.5C821.8 663.3 800.0 668.4 775.0 674.5C750.0 680.6 721.9 687.3 700.0 693.0C678.1 698.7 653.1 706.1 643.8 708.8C641.9 708.1 636.9 707.7 632.5 705.0C628.1 702.3 620.0 694.6 617.5 692.5C617.7 690.0 618.3 684.2 618.8 677.5C619.2 670.8 619.9 660.8 620.0 652.5C620.1 644.2 620.1 635.8 619.5 627.5C618.9 619.2 617.8 610.8 616.2 602.5C614.7 594.2 611.0 581.7 610.0 577.5C609.0 577.9 608.3 577.8 604.0 577.5C599.7 577.2 590.7 576.0 584.0 576.2C577.3 576.5 570.7 577.1 564.0 578.8C557.3 580.4 550.7 583.1 544.0 586.2C537.3 589.4 530.7 592.7 524.0 597.5C517.3 602.3 509.8 609.2 504.0 615.0C498.2 620.8 493.6 626.2 489.0 632.5C484.4 638.8 479.8 646.2 476.5 652.5C473.2 658.8 471.1 664.2 469.0 670.0C466.9 675.8 465.5 681.7 464.0 687.5C462.5 693.3 461.5 698.8 460.2 705.0C459.0 711.2 457.5 720.2 456.5 725.0C455.5 729.8 454.4 732.3 454.0 733.8C452.3 734.8 447.8 738.8 444.0 740.0C440.2 741.2 438.6 741.7 431.5 741.2C424.4 740.8 409.4 739.4 401.5 737.5C393.6 735.6 388.2 732.5 384.0 730.0C379.8 727.5 379.4 727.1 376.5 722.5C373.6 717.9 368.7 709.6 366.5 702.5C364.3 695.4 364.2 687.1 363.5 680.0C362.8 672.9 362.1 664.4 362.0 660.0C361.9 655.6 362.6 654.8 362.8 653.8C365.7 650.2 378.0 638.5 380.2 632.5C382.5 626.5 377.8 622.1 376.5 617.5C375.2 612.9 373.8 608.8 372.8 605.0C371.7 601.2 370.7 596.2 370.2 594.5Z"/></clipPath>
<clipPath id="cw"><path d="M655.5 500.0C660.9 494.3 680.5 474.0 688.0 466.0C695.5 458.0 694.2 458.8 700.5 452.0C706.8 445.2 717.2 433.6 725.5 425.0C733.8 416.4 742.2 407.7 750.5 400.5C758.8 393.3 767.2 387.2 775.5 382.0C783.8 376.8 790.1 373.3 800.5 369.0C810.9 364.7 825.1 359.7 838.0 356.0C850.9 352.3 865.5 349.3 878.0 347.0C890.5 344.7 898.8 343.3 913.0 342.0C927.2 340.7 943.2 339.6 963.0 339.2C982.8 338.9 1012.5 338.7 1032.0 340.0C1051.5 341.3 1065.3 344.4 1080.0 347.0C1094.7 349.6 1107.7 352.6 1120.0 355.5C1132.3 358.4 1148.3 363.0 1154.0 364.5C1146.2 367.1 1121.5 375.3 1107.0 380.0C1092.5 384.7 1088.2 386.2 1067.0 392.8C1045.8 399.4 1008.2 411.0 980.0 419.5C951.8 428.0 934.7 434.2 898.0 444.0C861.3 453.8 795.0 470.1 760.0 478.3C725.0 486.6 705.4 489.9 688.0 493.5C670.6 497.1 660.9 498.9 655.5 500.0Z"/></clipPath>
<clipPath id="cub"><path d="M420 604L660 505L1258 352L1285 440L1160 440L1090 560L1060 482L720 574L620 575L560 570Z"/></clipPath>
<filter id="b1"><feGaussianBlur stdDeviation="1"/></filter>
<filter id="b2"><feGaussianBlur stdDeviation="2"/></filter>
<filter id="b4"><feGaussianBlur stdDeviation="4"/></filter>
<filter id="b8"><feGaussianBlur stdDeviation="8"/></filter>
<filter id="b14"><feGaussianBlur stdDeviation="14"/></filter>
<filter id="nz" x="0" y="0" width="100%" height="100%"><feTurbulence type="fractalNoise" baseFrequency="0.9" numOctaves="2" seed="3" result="n"/><feColorMatrix type="matrix" values="0 0 0 0 1  0 0 0 0 1  0 0 0 0 1  0.9 0 0 0 -0.42"/></filter>
<linearGradient id="gbody" gradientUnits="userSpaceOnUse" x1="898" y1="447" x2="946" y2="641"><stop offset="0" stop-color="#25a9e5"/><stop offset=".2" stop-color="#1d9fdb"/><stop offset=".38" stop-color="#1592cf"/><stop offset=".45" stop-color="#0d86c3"/><stop offset="1" stop-color="#0a7eba"/></linearGradient>
<linearGradient id="gwin" gradientUnits="userSpaceOnUse" x1="700" y1="0" x2="1150" y2="0"><stop offset="0" stop-color="#2caeec"/><stop offset=".55" stop-color="#26a8e7"/><stop offset="1" stop-color="#1d9ddd"/></linearGradient>
<linearGradient id="gwed" gradientUnits="userSpaceOnUse" x1="680" y1="0" x2="944" y2="0"><stop offset="0" stop-color="#1594d4"/><stop offset=".5" stop-color="#22a4e2"/><stop offset="1" stop-color="#30b3ee"/></linearGradient>
<linearGradient id="gfend" gradientUnits="userSpaceOnUse" x1="480" y1="560" x2="520" y2="640"><stop offset="0" stop-color="#26adec"/><stop offset=".35" stop-color="#1496d7"/><stop offset="1" stop-color="#0d8bcc"/></linearGradient>
</defs>
<g clip-path="url(#cb)">
<path d="M370.2 594.5C372.1 592.1 376.9 584.9 381.5 580.0C386.1 575.1 390.2 570.8 397.8 565.0C405.2 559.2 415.9 550.8 426.5 545.0C437.1 539.2 450.1 534.6 461.5 530.0C472.9 525.4 480.8 523.1 495.0 517.6C509.2 512.1 526.8 504.4 547.0 497.0C567.2 489.6 604.9 477.0 616.5 473.0C622.1 468.6 638.1 455.8 650.0 446.5C661.9 437.2 677.5 426.0 688.0 417.5C698.5 409.0 704.7 401.9 713.0 395.5C721.3 389.1 729.7 384.2 738.0 379.2C746.3 374.2 754.7 369.5 763.0 365.5C771.3 361.5 779.7 358.4 788.0 355.5C796.3 352.6 804.7 350.3 813.0 348.0C821.3 345.7 829.7 343.6 838.0 341.8C846.3 339.9 854.7 338.4 863.0 336.8C871.3 335.1 879.7 333.2 888.0 331.8C896.3 330.3 904.7 329.0 913.0 328.0C921.3 327.0 929.7 326.2 938.0 325.5C946.3 324.8 954.7 323.9 963.0 323.5C971.3 323.1 979.7 323.0 988.0 323.0C996.3 323.0 1005.7 323.4 1013.0 323.8C1020.3 324.1 1020.5 323.7 1032.0 325.0C1043.5 326.3 1065.3 329.8 1082.0 331.8C1098.7 333.7 1119.1 335.5 1132.0 336.8C1144.9 338.0 1154.9 338.8 1159.5 339.2C1163.2 338.7 1174.1 337.1 1182.0 336.0C1189.9 334.9 1198.7 333.6 1207.0 332.5C1215.3 331.4 1225.3 330.0 1232.0 329.2C1238.7 328.5 1244.5 328.2 1247.0 328.0C1248.0 328.8 1251.2 330.1 1253.2 333.0C1255.3 335.9 1257.2 340.9 1259.5 345.5C1261.8 350.1 1264.7 355.1 1267.0 360.5C1269.3 365.9 1271.4 372.2 1273.2 378.0C1275.1 383.8 1276.6 390.1 1278.2 395.5C1279.9 400.9 1281.7 405.5 1283.2 410.5C1284.8 415.5 1286.6 420.9 1287.5 425.5C1288.4 430.1 1288.8 433.4 1288.8 438.0C1288.7 442.6 1287.9 448.0 1287.0 453.0C1286.1 458.0 1284.7 462.2 1283.2 468.0C1281.8 473.8 1280.1 481.8 1278.2 488.0C1276.4 494.2 1274.7 500.5 1272.0 505.5C1269.3 510.5 1265.8 515.1 1262.0 518.0C1258.2 520.9 1254.5 522.0 1249.5 523.0C1244.5 524.0 1237.2 524.2 1232.0 524.2C1226.8 524.2 1220.5 523.2 1218.2 523.0C1218.5 519.7 1219.2 509.7 1219.5 503.0C1219.8 496.3 1220.0 489.7 1220.0 483.0C1220.0 476.3 1219.8 468.8 1219.5 463.0C1219.2 457.2 1218.9 452.6 1218.2 448.0C1217.6 443.4 1216.2 437.6 1215.8 435.5C1213.8 435.6 1208.3 435.2 1204.0 436.0C1199.7 436.8 1195.7 438.0 1190.0 440.5C1184.3 443.0 1176.7 446.2 1170.0 451.0C1163.3 455.8 1155.3 463.5 1150.0 469.0C1144.7 474.5 1141.4 479.7 1138.0 484.0C1134.6 488.3 1132.3 491.3 1129.6 495.0C1126.9 498.7 1124.5 502.1 1122.0 506.0C1119.5 509.9 1116.8 514.2 1114.7 518.2C1112.6 522.2 1111.1 526.4 1109.4 530.0C1107.8 533.6 1106.9 535.4 1104.8 540.0C1102.7 544.6 1099.3 550.8 1097.0 557.5C1094.7 564.2 1092.6 573.5 1090.8 580.0C1088.9 586.5 1088.0 592.7 1085.8 596.2C1083.5 599.8 1078.5 600.4 1077.0 601.2C1069.5 603.0 1054.2 606.1 1032.0 611.5C1009.8 616.9 974.3 626.0 944.0 633.5C913.7 641.0 878.2 649.7 850.0 656.5C821.8 663.3 800.0 668.4 775.0 674.5C750.0 680.6 721.9 687.3 700.0 693.0C678.1 698.7 653.1 706.1 643.8 708.8C641.9 708.1 636.9 707.7 632.5 705.0C628.1 702.3 620.0 694.6 617.5 692.5C617.7 690.0 618.3 684.2 618.8 677.5C619.2 670.8 619.9 660.8 620.0 652.5C620.1 644.2 620.1 635.8 619.5 627.5C618.9 619.2 617.8 610.8 616.2 602.5C614.7 594.2 611.0 581.7 610.0 577.5C609.0 577.9 608.3 577.8 604.0 577.5C599.7 577.2 590.7 576.0 584.0 576.2C577.3 576.5 570.7 577.1 564.0 578.8C557.3 580.4 550.7 583.1 544.0 586.2C537.3 589.4 530.7 592.7 524.0 597.5C517.3 602.3 509.8 609.2 504.0 615.0C498.2 620.8 493.6 626.2 489.0 632.5C484.4 638.8 479.8 646.2 476.5 652.5C473.2 658.8 471.1 664.2 469.0 670.0C466.9 675.8 465.5 681.7 464.0 687.5C462.5 693.3 461.5 698.8 460.2 705.0C459.0 711.2 457.5 720.2 456.5 725.0C455.5 729.8 454.4 732.3 454.0 733.8C452.3 734.8 447.8 738.8 444.0 740.0C440.2 741.2 438.6 741.7 431.5 741.2C424.4 740.8 409.4 739.4 401.5 737.5C393.6 735.6 388.2 732.5 384.0 730.0C379.8 727.5 379.4 727.1 376.5 722.5C373.6 717.9 368.7 709.6 366.5 702.5C364.3 695.4 364.2 687.1 363.5 680.0C362.8 672.9 362.1 664.4 362.0 660.0C361.9 655.6 362.6 654.8 362.8 653.8C365.7 650.2 378.0 638.5 380.2 632.5C382.5 626.5 377.8 622.1 376.5 617.5C375.2 612.9 373.8 608.8 372.8 605.0C371.7 601.2 370.7 596.2 370.2 594.5Z" fill="url(#gbody)"/>
<path d="M630.0 590.0L690.0 580.0L688.0 690.0L640.0 705.0L628.0 640.0Z" fill="#1193d4" filter="url(#b8)" opacity=".8"/>
<path d="M420.0 604.0C425.0 600.7 437.7 590.3 450.0 584.0C462.3 577.7 479.3 572.0 494.0 566.0C508.7 560.0 523.3 553.5 538.0 548.0C552.7 542.5 567.3 537.5 582.0 533.0C596.7 528.5 609.7 525.2 626.0 521.0C642.3 516.8 671.0 510.2 680.0 508.0" fill="none" stroke="#2cb3f0" stroke-width="9" filter="url(#b4)" opacity=".9"/>
<path d="M612.0 583.0C607.3 582.7 592.0 580.8 584.0 581.0C576.0 581.2 570.7 582.3 564.0 584.0C557.3 585.7 550.7 587.8 544.0 591.0C537.3 594.2 530.3 598.3 524.0 603.0C517.7 607.7 511.3 613.5 506.0 619.0C500.7 624.5 496.3 629.8 492.0 636.0C487.7 642.2 483.2 649.8 480.0 656.0C476.8 662.2 475.0 667.3 473.0 673.0C471.0 678.7 469.5 684.3 468.0 690.0C466.5 695.7 465.3 700.8 464.0 707.0C462.7 713.2 461.2 721.8 460.0 727.0C458.8 732.2 457.5 736.2 457.0 738.0" fill="none" stroke="#0a7fbd" stroke-width="11" filter="url(#b2)"/>
<path d="M612.0 586.0C607.3 585.8 592.0 584.3 584.0 584.5C576.0 584.7 570.3 585.4 564.0 587.0C557.7 588.6 552.2 591.0 546.0 594.0C539.8 597.0 533.2 600.5 527.0 605.0C520.8 609.5 514.3 615.5 509.0 621.0C503.7 626.5 499.3 631.8 495.0 638.0C490.7 644.2 486.2 651.8 483.0 658.0C479.8 664.2 478.0 669.3 476.0 675.0C474.0 680.7 472.5 686.3 471.0 692.0C469.5 697.7 467.7 706.2 467.0 709.0" fill="none" stroke="#1697d8" stroke-width="1.500" opacity=".7"/>
<path d="M370.2 594.5C372.1 592.1 376.9 584.9 381.5 580.0C386.1 575.1 390.2 570.8 397.8 565.0C405.2 559.2 415.9 550.8 426.5 545.0C437.1 539.2 450.1 534.6 461.5 530.0C472.9 525.4 480.8 523.1 495.0 517.6C509.2 512.1 526.8 504.4 547.0 497.0C567.2 489.6 604.9 477.0 616.5 473.0C623.1 478.2 649.4 498.8 656.0 504.0C650.6 505.5 636.3 509.3 623.6 512.8C610.9 516.3 594.6 520.4 580.0 525.0C565.4 529.6 550.7 534.8 536.0 540.3C521.3 545.8 506.7 552.1 492.0 558.0C477.3 563.9 461.4 568.6 448.0 575.4C434.6 582.1 417.7 594.6 411.6 598.5C404.7 597.8 377.1 595.2 370.2 594.5Z" fill="#0c87c8"/>
<path d="M372.0 596.0C373.8 593.7 378.5 586.8 383.0 582.0C387.5 577.2 391.5 572.8 399.0 567.0C406.5 561.2 417.3 552.8 428.0 547.0C438.7 541.2 451.7 536.6 463.0 532.0C474.3 527.4 481.8 525.0 496.0 519.5C510.2 514.0 527.8 506.4 548.0 499.0C568.2 491.6 605.5 479.0 617.0 475.0" fill="none" stroke="#0a7dbb" stroke-width="6" filter="url(#b2)"/>
<path d="M560.0 495.0L617.8 472.5L700.0 410.0L756.0 400.0L655.5 500.0L640.0 505.0L600.0 516.0Z" fill="#0a79b6" filter="url(#b2)"/>
<path d="M622.0 476.0C627.0 472.0 640.7 460.8 652.0 452.0C663.3 443.2 679.5 431.5 690.0 423.0C700.5 414.5 706.7 407.3 715.0 401.0C723.3 394.7 735.8 387.7 740.0 385.0" fill="none" stroke="#1093d5" stroke-width="12" filter="url(#b1)"/>
<path d="M370.2 594.5L412.8 598.8L426.5 640.0L404.0 660.0L362.8 653.8L380.2 632.5L376.5 617.5Z" fill="#1492d3"/>
<ellipse cx="402" cy="642" rx="22" ry="6" fill="#3fbef3" filter="url(#b4)" transform="rotate(14 402 642)"/>
<path d="M362.8 653.8L404.0 660.0L426.5 640.0L440.0 700.0L454.0 733.8L444.0 740.0L431.5 741.2L401.5 737.5L384.0 730.0L376.5 722.5L366.5 702.5L363.5 680.0L362.0 660.0Z" fill="#0c85c6"/>
<path d="M362 662L404 668L426 648L426.500 640L404 660L362.750 653.750Z" fill="#0a78b4" filter="url(#b1)"/>
<path d="M366 700L384 730L431 741L454 734L452 722L420 728L390 718L372 698Z" fill="#0978b4" filter="url(#b4)"/>
<path d="M371 595L411.600 598.500" stroke="#48bdf0" stroke-width="1" opacity=".7"/>
<path d="M363 654.500L404 660.500" stroke="#48bdf0" stroke-width="1" opacity=".7"/>
<path d="M688.0 417.5C692.2 413.8 704.7 401.9 713.0 395.5C721.3 389.1 729.7 384.2 738.0 379.2C746.3 374.2 754.7 369.5 763.0 365.5C771.3 361.5 779.7 358.4 788.0 355.5C796.3 352.6 804.7 350.3 813.0 348.0C821.3 345.7 829.7 343.6 838.0 341.8C846.3 339.9 854.7 338.4 863.0 336.8C871.3 335.1 879.7 333.2 888.0 331.8C896.3 330.3 904.7 329.0 913.0 328.0C921.3 327.0 929.7 326.2 938.0 325.5C946.3 324.8 954.7 323.9 963.0 323.5C971.3 323.1 979.7 323.0 988.0 323.0C996.3 323.0 1005.7 323.4 1013.0 323.8C1020.3 324.1 1020.5 323.7 1032.0 325.0C1043.5 326.3 1065.3 329.8 1082.0 331.8C1098.7 333.7 1119.1 335.5 1132.0 336.8C1144.9 338.0 1154.9 338.8 1159.5 339.2C1163.2 338.7 1174.1 337.1 1182.0 336.0C1189.9 334.9 1198.7 333.6 1207.0 332.5C1215.3 331.4 1225.3 330.0 1232.0 329.2C1238.7 328.5 1244.5 328.2 1247.0 328.0" fill="none" stroke="#0b82c2" stroke-width="40"/>
<path d="M655.5 500.0C660.9 494.3 680.5 474.0 688.0 466.0C695.5 458.0 694.2 458.8 700.5 452.0C706.8 445.2 717.2 433.6 725.5 425.0C733.8 416.4 742.2 407.7 750.5 400.5C758.8 393.3 767.2 387.2 775.5 382.0C783.8 376.8 790.1 373.3 800.5 369.0C810.9 364.7 825.1 359.7 838.0 356.0C850.9 352.3 865.5 349.3 878.0 347.0C890.5 344.7 898.8 343.3 913.0 342.0C927.2 340.7 943.2 339.6 963.0 339.2C982.8 338.9 1012.5 338.7 1032.0 340.0C1051.5 341.3 1065.3 344.4 1080.0 347.0C1094.7 349.6 1107.7 352.6 1120.0 355.5C1132.3 358.4 1148.3 363.0 1154.0 364.5C1146.2 367.1 1121.5 375.3 1107.0 380.0C1092.5 384.7 1088.2 386.2 1067.0 392.8C1045.8 399.4 1008.2 411.0 980.0 419.5C951.8 428.0 934.7 434.2 898.0 444.0C861.3 453.8 795.0 470.1 760.0 478.3C725.0 486.6 705.4 489.9 688.0 493.5C670.6 497.1 660.9 498.9 655.5 500.0Z" fill="url(#gwin)"/>
<g clip-path="url(#cw)"><path d="M655.5 500.0C660.9 494.3 680.5 474.0 688.0 466.0C695.5 458.0 694.2 458.8 700.5 452.0C706.8 445.2 717.2 433.6 725.5 425.0C733.8 416.4 742.2 407.7 750.5 400.5C758.8 393.3 767.2 387.2 775.5 382.0C783.8 376.8 790.1 373.3 800.5 369.0C810.9 364.7 825.1 359.7 838.0 356.0C850.9 352.3 865.5 349.3 878.0 347.0C890.5 344.7 898.8 343.3 913.0 342.0C927.2 340.7 943.2 339.6 963.0 339.2C982.8 338.9 1012.5 338.7 1032.0 340.0C1051.5 341.3 1065.3 344.4 1080.0 347.0C1094.7 349.6 1107.7 352.6 1120.0 355.5C1132.3 358.4 1148.3 363.0 1154.0 364.5" fill="none" stroke="#0a76b2" stroke-width="6" filter="url(#b2)"/>
<path d="M884 345L889 380L893 410L899 446" fill="none" stroke="#1487c5" stroke-width="4" filter="url(#b2)"/>
<rect x="650" y="320" width="520" height="190" filter="url(#nz)" opacity=".35"/></g>
<path d="M899 448L903 480L906 520L908 560L909 600L909 640" fill="none" stroke="#2aaeea" stroke-width="6" filter="url(#b4)" opacity=".12"/>
<path d="M895 448L899 480L902 520L904 560" fill="none" stroke="#0a78b4" stroke-width="2" filter="url(#b2)" opacity=".1"/>
<g clip-path="url(#cub)"><rect x="420" y="380" width="880" height="240" filter="url(#nz)" opacity=".22"/></g>
<path d="M1080.0 347.0L1120.0 355.5L1154.0 364.5L1219.0 349.7L1255.0 344.5L1247.0 328.0L1159.5 339.2L1082.0 331.8Z" fill="#0b80bf"/>
<path d="M640.0 504.0C642.7 503.3 648.0 501.8 656.0 500.0C664.0 498.2 670.7 497.1 688.0 493.5C705.3 489.9 725.0 486.6 760.0 478.3C795.0 470.1 861.3 453.8 898.0 444.0C934.7 434.2 951.8 428.0 980.0 419.5C1008.2 411.0 1038.0 402.2 1067.0 392.8C1096.0 383.4 1132.2 369.3 1154.0 362.8C1175.8 356.3 1181.5 357.0 1198.0 353.6C1214.5 350.2 1243.8 344.5 1253.0 342.7C1253.8 344.7 1257.2 352.7 1258.0 354.7C1248.0 356.7 1215.3 362.9 1198.0 366.7C1180.7 370.5 1175.8 371.2 1154.0 377.6C1132.2 384.0 1096.0 396.2 1067.0 404.8C1038.0 413.4 1008.2 421.5 980.0 429.5C951.8 437.5 934.7 443.5 898.0 453.0C861.3 462.5 795.0 478.4 760.0 486.4C725.0 494.4 705.3 497.9 688.0 501.0C670.7 504.1 664.0 503.8 656.0 505.0C648.0 506.2 642.7 507.5 640.0 508.0Z" fill="#0a72ab" stroke="#0a72ab" stroke-width="1.200"/>
<path d="M1100.0 410.0L1160.0 380.0L1250.0 358.0L1270.0 400.0L1282.0 440.0L1240.0 432.0L1200.0 430.0L1160.0 448.0L1130.0 480.0L1105.0 520.0L1085.0 560.0L1060.0 520.0L1080.0 450.0Z" fill="#1c9fdf" filter="url(#b8)"/>
<ellipse cx="1165" cy="425" rx="48" ry="22" fill="#30b6f0" filter="url(#b14)" transform="rotate(-38 1165 425)" opacity=".8"/>
<ellipse cx="1160" cy="435" rx="36" ry="14" fill="#49ccfa" filter="url(#b8)" transform="rotate(-42 1160 435)"/>
<ellipse cx="1161" cy="438" rx="16" ry="7" fill="#52d2fd" filter="url(#b8)" transform="rotate(-40 1161 438)" opacity=".8"/>
<path d="M1249.0 330.0L1258.0 352.0L1268.0 385.0L1276.0 420.0L1280.0 450.0L1294.0 450.0L1294.0 400.0L1272.0 340.0Z" fill="#0b86c7" filter="url(#b2)"/>
<path d="M1215.8 435.5C1213.8 435.6 1208.3 435.2 1204.0 436.0C1199.7 436.8 1195.7 438.0 1190.0 440.5C1184.3 443.0 1176.7 446.2 1170.0 451.0C1163.3 455.8 1155.3 463.5 1150.0 469.0C1144.7 474.5 1141.4 479.7 1138.0 484.0C1134.6 488.3 1132.3 491.3 1129.6 495.0C1126.9 498.7 1124.5 502.1 1122.0 506.0C1119.5 509.9 1115.9 516.2 1114.7 518.2" fill="none" stroke="#0a7ebc" stroke-width="12" filter="url(#b1)"/>
<path d="M1218.2 523.0C1218.5 519.7 1219.2 509.7 1219.5 503.0C1219.8 496.3 1220.0 489.7 1220.0 483.0C1220.0 476.3 1219.8 468.8 1219.5 463.0C1219.2 457.2 1218.9 452.6 1218.2 448.0C1217.6 443.4 1216.2 437.6 1215.8 435.5C1219.3 434.8 1229.3 430.2 1237.0 431.0C1244.7 431.8 1254.8 433.5 1262.0 440.0C1269.2 446.5 1277.0 465.0 1280.0 470.0C1279.7 473.0 1279.6 482.1 1278.2 488.0C1276.9 493.9 1274.7 500.5 1272.0 505.5C1269.3 510.5 1265.8 515.1 1262.0 518.0C1258.2 520.9 1254.5 522.0 1249.5 523.0C1244.5 524.0 1237.2 524.2 1232.0 524.2C1226.8 524.2 1220.5 523.2 1218.2 523.0Z" fill="#0d86c6"/>
<path d="M1218.2 523.0C1218.5 519.7 1219.2 509.7 1219.5 503.0C1219.8 496.3 1220.0 489.7 1220.0 483.0C1220.0 476.3 1219.8 468.8 1219.5 463.0C1219.2 457.2 1218.9 452.6 1218.2 448.0C1217.6 443.4 1216.2 437.6 1215.8 435.5C1219.8 435.7 1232.4 436.3 1238.6 439.0C1244.8 441.7 1249.3 446.4 1253.4 451.3C1257.5 456.2 1261.3 462.5 1263.4 468.7C1265.5 474.9 1265.8 481.9 1265.8 488.5C1265.8 495.1 1265.5 502.9 1263.4 508.3C1261.3 513.7 1257.3 517.8 1253.4 520.7C1249.5 523.7 1242.2 525.1 1240.0 526.0C1236.4 525.5 1221.9 523.5 1218.2 523.0Z" fill="#0b7dba"/>
<path d="M1216.0 435.0C1219.8 435.7 1232.4 436.3 1238.6 439.0C1244.8 441.7 1249.3 446.4 1253.4 451.3C1257.5 456.2 1261.3 462.5 1263.4 468.7C1265.5 474.9 1265.8 481.9 1265.8 488.5C1265.8 495.1 1265.5 502.9 1263.4 508.3C1261.3 513.7 1257.3 517.8 1253.4 520.7C1249.5 523.7 1242.2 525.1 1240.0 526.0" fill="none" stroke="#0a73ad" stroke-width="3" filter="url(#b1)"/>
<path d="M1226.0 445.0C1227.7 448.3 1233.8 457.5 1236.0 465.0C1238.2 472.5 1239.0 482.2 1239.0 490.0C1239.0 497.8 1236.5 508.3 1236.0 512.0" fill="none" stroke="#0f8acb" stroke-width="7" filter="url(#b2)"/>
<path d="M705.0 580.0L740.0 570.0L735.0 655.0L700.0 663.0L683.0 667.0L687.0 655.0L689.0 645.0L688.0 620.0L689.5 600.0L694.5 589.0Z" fill="#0b80bd" filter="url(#b4)" opacity=".8"/>
<path d="M705.0 577.5C702.9 579.2 695.4 583.8 692.5 587.5C689.6 591.2 688.5 594.6 687.5 600.0C686.5 605.4 686.3 612.5 686.2 620.0C686.2 627.5 687.2 638.8 687.0 645.0C686.8 651.2 686.2 653.5 685.0 657.5C683.8 661.5 680.8 666.9 680.0 668.8" fill="none" stroke="#0a72ab" stroke-width="4" filter="url(#b1)"/>
<path d="M690.0 590.0C691.2 588.8 693.7 585.2 697.0 583.0C700.3 580.8 705.3 579.0 710.0 577.0C714.7 575.0 714.2 574.5 725.0 571.0C735.8 567.5 758.3 560.6 775.0 556.0C791.7 551.4 806.2 548.2 825.0 543.5C843.8 538.8 865.5 533.2 888.0 527.5C910.5 521.8 948.0 512.1 960.0 509.0" fill="none" stroke="#08679b" stroke-width="7" filter="url(#b1)" stroke-linecap="round"/>
<path d="M960.0 509.0C968.3 506.8 1001.7 498.2 1010.0 496.0" fill="none" stroke="#08679b" stroke-width="4.500" filter="url(#b1)" stroke-linecap="round"/>
<path d="M1010.0 496.0C1017.3 494.2 1046.7 486.8 1054.0 485.0" fill="none" stroke="#08679b" stroke-width="2.500" filter="url(#b1)" stroke-linecap="round" opacity=".8"/>
<path d="M680.0 668.8C691.7 665.6 725.8 656.0 750.0 650.0C774.2 644.0 800.0 638.3 825.0 632.5C850.0 626.7 880.2 619.5 900.0 615.0C919.8 610.5 936.7 607.1 944.0 605.5C953.3 603.9 977.8 596.7 1000.0 596.0C1022.2 595.3 1064.2 600.4 1077.0 601.2C1069.5 603.0 1054.2 606.1 1032.0 611.5C1009.8 616.9 974.3 626.0 944.0 633.5C913.7 641.0 878.2 649.7 850.0 656.5C821.8 663.3 800.0 668.4 775.0 674.5C750.0 680.6 712.5 689.9 700.0 693.0C696.7 689.0 683.3 672.8 680.0 668.8Z" fill="#0a7fbe"/>
<path d="M688.8 646.2C699.0 644.5 727.3 639.3 750.0 635.5C772.7 631.7 800.0 627.5 825.0 623.5C850.0 619.5 880.2 614.6 900.0 611.5C919.8 608.4 936.7 606.1 944.0 605.0C936.7 607.1 919.8 610.5 900.0 615.0C880.2 619.5 850.0 626.7 825.0 632.5C800.0 638.3 774.2 644.0 750.0 650.0C725.8 656.0 691.7 665.6 680.0 668.8Z" fill="url(#gwed)"/>
<path d="M688.8 646.2C699.0 644.5 727.3 639.3 750.0 635.5C772.7 631.7 800.0 627.5 825.0 623.5C850.0 619.5 880.2 614.6 900.0 611.5C919.8 608.4 936.7 606.1 944.0 605.0" fill="none" stroke="#6acff7" stroke-width="1" opacity=".8"/>
<path d="M610.0 578.0C612.9 578.8 622.5 579.2 627.5 582.5C632.5 585.8 636.7 592.1 640.0 597.5C643.3 602.9 645.6 607.9 647.5 615.0C649.4 622.1 650.4 631.7 651.2 640.0C652.1 648.3 652.5 656.7 652.5 665.0C652.5 673.3 652.0 683.0 651.2 690.0C650.5 697.0 648.5 704.2 648.0 707.0C647.3 707.3 644.5 708.5 643.8 708.8C641.9 708.1 636.9 707.7 632.5 705.0C628.1 702.3 620.0 694.6 617.5 692.5C617.7 690.0 618.3 684.2 618.8 677.5C619.2 670.8 619.9 660.8 620.0 652.5C620.1 644.2 620.1 635.8 619.5 627.5C618.9 619.2 617.8 610.8 616.2 602.5C614.7 594.2 611.0 581.7 610.0 577.5Z" fill="#0d86c6"/>
<path d="M610.0 578.0C612.9 578.8 622.5 579.2 627.5 582.5C632.5 585.8 636.7 592.1 640.0 597.5C643.3 602.9 645.6 607.9 647.5 615.0C649.4 622.1 650.4 631.7 651.2 640.0C652.1 648.3 652.5 656.7 652.5 665.0C652.5 673.3 652.0 683.0 651.2 690.0C650.5 697.0 648.5 704.2 648.0 707.0" fill="none" stroke="#0a75b0" stroke-width="3" filter="url(#b1)"/>
<path d="M611.0 580.0C612.0 583.8 615.5 595.0 617.0 603.0C618.5 611.0 619.4 619.7 620.0 628.0C620.6 636.3 620.7 644.7 620.5 653.0C620.3 661.3 619.4 671.2 619.0 678.0C618.6 684.8 618.2 691.3 618.0 694.0" fill="none" stroke="#0a78b4" stroke-width="12" filter="url(#b4)"/>
</g>
<path d="M384.0 730.0C382.8 728.8 379.4 727.1 376.5 722.5C373.6 717.9 368.7 709.6 366.5 702.5C364.3 695.4 364.2 687.1 363.5 680.0C362.8 672.9 362.1 664.4 362.0 660.0C361.9 655.6 362.6 654.8 362.8 653.8C365.7 650.2 378.0 638.5 380.2 632.5C382.5 626.5 377.8 622.1 376.5 617.5C375.2 612.9 373.8 608.8 372.8 605.0C371.7 601.2 370.7 596.2 370.2 594.5C372.1 592.1 376.9 584.9 381.5 580.0C386.1 575.1 390.2 570.8 397.8 565.0C405.2 559.2 415.9 550.8 426.5 545.0C437.1 539.2 450.1 534.6 461.5 530.0C472.9 525.4 480.8 523.1 495.0 517.6C509.2 512.1 526.8 504.4 547.0 497.0C567.2 489.6 604.9 477.0 616.5 473.0C622.1 468.6 638.1 455.8 650.0 446.5C661.9 437.2 677.5 426.0 688.0 417.5C698.5 409.0 704.7 401.9 713.0 395.5C721.3 389.1 729.7 384.2 738.0 379.2C746.3 374.2 754.7 369.5 763.0 365.5C771.3 361.5 779.7 358.4 788.0 355.5C796.3 352.6 804.7 350.3 813.0 348.0C821.3 345.7 829.7 343.6 838.0 341.8C846.3 339.9 854.7 338.4 863.0 336.8C871.3 335.1 879.7 333.2 888.0 331.8C896.3 330.3 904.7 329.0 913.0 328.0C921.3 327.0 929.7 326.2 938.0 325.5C946.3 324.8 954.7 323.9 963.0 323.5C971.3 323.1 979.7 323.0 988.0 323.0C996.3 323.0 1005.7 323.4 1013.0 323.8C1020.3 324.1 1020.5 323.7 1032.0 325.0C1043.5 326.3 1065.3 329.8 1082.0 331.8C1098.7 333.7 1119.1 335.5 1132.0 336.8C1144.9 338.0 1154.9 338.8 1159.5 339.2C1163.2 338.7 1174.1 337.1 1182.0 336.0C1189.9 334.9 1198.7 333.6 1207.0 332.5C1215.3 331.4 1225.3 330.0 1232.0 329.2C1238.7 328.5 1244.5 328.2 1247.0 328.0C1248.0 328.8 1252.2 332.2 1253.2 333.0" fill="none" stroke="#22e428" stroke-width="2.2" stroke-linejoin="round"/>
<path d="M454.0 733.8C452.3 734.8 447.8 738.8 444.0 740.0C440.2 741.2 438.6 741.7 431.5 741.2C424.4 740.8 409.4 739.4 401.5 737.5C393.6 735.6 386.9 731.2 384.0 730.0" fill="none" stroke="#22e428" stroke-width="1.6" stroke-linejoin="round"/>
<path d="M610.0 577.5C611.0 581.7 614.7 594.2 616.2 602.5C617.8 610.8 618.9 619.2 619.5 627.5C620.1 635.8 620.1 644.2 620.0 652.5C619.9 660.8 619.2 670.8 618.8 677.5C618.3 684.2 617.7 690.0 617.5 692.5C620.0 694.6 628.1 702.3 632.5 705.0C636.9 707.7 641.9 708.1 643.8 708.8C653.1 706.1 678.1 698.7 700.0 693.0C721.9 687.3 750.0 680.6 775.0 674.5C800.0 668.4 821.8 663.3 850.0 656.5C878.2 649.7 913.7 641.0 944.0 633.5C974.3 626.0 1009.8 616.9 1032.0 611.5C1054.2 606.1 1069.5 603.0 1077.0 601.2" fill="none" stroke="#22e428" stroke-width="2.6" stroke-linejoin="round"/>
<path d="M1218.2 523.0C1218.5 519.7 1219.2 509.7 1219.5 503.0C1219.8 496.3 1220.0 489.7 1220.0 483.0C1220.0 476.3 1219.8 468.8 1219.5 463.0C1219.2 457.2 1218.9 452.6 1218.2 448.0C1217.6 443.4 1216.2 437.6 1215.8 435.5" fill="none" stroke="#22e428" stroke-width="2.2" stroke-linejoin="round"/>
</svg>
<div class="a tb" style="top:177px"></div>
<div class="a tb" style="top:203px"></div>
<div class="a tb" style="top:229px"></div>
<div class="a tb" style="top:255px"></div>
<div class="a tb" style="top:281px"></div>
<div class="a tb on" style="top:307px"></div>
<div class="a tb" style="top:333px"></div>
<div class="a tb" style="top:359px"></div>
<div class="a tb" style="top:385px"></div>
<div class="a tb" style="top:411px"></div>
<div class="a tb on" style="top:437px"></div>
<div class="a tb" style="top:463px"></div>
<div class="a tb" style="top:489px"></div>
<div class="a tb on" style="top:515px"></div>
<div class="a tb" style="top:541px"></div>
<div class="a tb on" style="top:567px"></div>
<div class="a tb" style="top:593px"></div>
<svg class="a" style="left:0;top:0" width="1376" height="640" viewBox="0 0 1376 640">
<g transform="translate(1343 177)"><path d="M4 5L8 2.500L17 2.500L17 13L13 16L4 16Z" fill="#0a28c8"/><path d="M4 5L13 5L17 2.500L8 2.500Z" fill="#2a6af0"/><path d="M4 5L13 5L13 16L4 16Z" fill="#0a34e0"/><path d="M13 5L17 2.500L17 13L13 16Z" fill="#061a90"/><path d="M2 13.500L5.500 11.500L5.500 15.500Z" fill="#111"/><path d="M4 13.500h4" stroke="#111" stroke-width="1.200"/></g>
<g transform="translate(1343 203)"><path d="M14.500 6.500A5.500 5.500 0 1 1 6 6" fill="none" stroke="#3a7ae0" stroke-width="3.200"/><path d="M9.500 2.500L15.500 3L12 8.500Z" fill="#3a7ae0"/><path d="M14.500 9A5 5 0 0 1 6 13" fill="none" stroke="#7ab0f4" stroke-width="1.200"/></g>
<g transform="translate(1343 229)"><rect x="3.500" y="2.500" width="14" height="14" fill="#1a5ae8" stroke="#0a1a8a" stroke-width="1"/><path d="M4 3L17 3L4 16Z" fill="#6ab8f8"/><path d="M1.500 14.500L5.500 12.500L5.500 16.500Z" fill="#111"/><path d="M4 14.500h4" stroke="#111" stroke-width="1.200"/></g>
<g transform="translate(1343 255)"><circle cx="6.500" cy="6.500" r="3.300" fill="#d8f0a0" stroke="#5ac81a" stroke-width="1.600"/><path d="M13.500 2.500L17.500 9.500L9.800 9.500Z" fill="#6ad81a"/><rect x="3" y="12" width="14.500" height="4.500" fill="#6ad81a"/><rect x="3" y="12" width="14.500" height="2" fill="#a8ec4a"/></g>
<g transform="translate(1343 281)"><circle cx="8.500" cy="8" r="5.500" fill="#f4f8fc" stroke="#9aa0a8" stroke-width="1.300"/><path d="M5.500 6.500v-1.500h1.500M10 5h1.500v1.500M11.500 9.500v1.500h-1.500M7 11h-1.500v-1.500" fill="none" stroke="#4a6ab0" stroke-width="1"/><path d="M12.500 12.500L17.500 17.500" stroke="#555" stroke-width="2.200" stroke-linecap="round"/></g>
<g transform="translate(1343 307)"><circle cx="10" cy="10" r="7" fill="none" stroke="#b01818" stroke-width="1.600"/><circle cx="9.500" cy="10.500" r="4.800" fill="#e02020"/><path d="M12.500 3.500l1.200 2.300l2.600.4l-1.900 1.800l.5 2.600l-2.400-1.300l-2.300 1.300l.4-2.600l-1.800-1.800l2.500-.4z" fill="#f8d82a"/><path d="M15.500 14.500L18 13L17 17Z" fill="#b01818"/></g>
<g transform="translate(1343 333)"><rect x="3" y="4" width="12" height="9" fill="#eef2fc" stroke="#1a2ab0" stroke-width="1.400" stroke-dasharray="2.400 1.600"/><path d="M12.0 8.5l0 8l2-1.800l1.600 3.400l1.400-.7l-1.600-3.300l2.700-.2z" fill="#111"/></g>
<g transform="translate(1343 359)"><ellipse cx="9" cy="9.500" rx="6.500" ry="4.500" fill="#eef2fc" stroke="#1a2ab0" stroke-width="1.400" stroke-dasharray="2.400 1.600"/><path d="M12.0 9.0l0 8l2-1.800l1.600 3.400l1.400-.7l-1.600-3.300l2.700-.2z" fill="#111"/></g>
<g transform="translate(1343 385)"><path d="M3.500 15.500L16.500 3" stroke="#3a4ad0" stroke-width="1.500"/><path d="M11.5 9.0l0 8l2-1.800l1.600 3.400l1.400-.7l-1.600-3.300l2.700-.2z" fill="#111"/></g>
<g transform="translate(1343 411)"><path d="M16.500 3L9 11" stroke="#d8c8a0" stroke-width="2"/><path d="M9 10.500Q5 11.500 3 15.500Q7.500 16.500 10 12Z" fill="#8a4a22"/><path d="M11.5 8.0l0 8l2-1.800l1.600 3.400l1.400-.7l-1.600-3.300l2.700-.2z" fill="#111"/></g>
<g transform="translate(1343 437)"><path d="M5.500 11Q2.500 7 6 4.500Q10 2.500 13.500 5Q16 8 12.500 10.500Q9 12 6.500 11Q4 13 5 16" fill="none" stroke="#7a4a1a" stroke-width="1.400"/><path d="M11.5 9.0l0 8l2-1.800l1.600 3.400l1.400-.7l-1.600-3.300l2.700-.2z" fill="#111"/></g>
<g transform="translate(1343 463)"><path d="M3.500 4L15.500 3L16.500 13L5.500 15.500Z" fill="none" stroke="#0a1a9a" stroke-width="1.500"/><g fill="#0a1a9a"><rect x="2.500" y="3" width="2.200" height="2.200"/><rect x="14.500" y="2" width="2.200" height="2.200"/><rect x="4.500" y="14.500" width="2.200" height="2.200"/></g><path d="M12.0 9.0l0 8l2-1.800l1.600 3.400l1.400-.7l-1.600-3.300l2.700-.2z" fill="#111"/></g>
<g transform="translate(1343 489)"><path d="M3.500 4L13.500 3L15 8M12 13L5.500 15.500Z" fill="none" stroke="#0a1a7a" stroke-width="1.300" stroke-dasharray="2 1.300"/><path d="M3.500 4L5.500 15.500" stroke="#0a1a7a" stroke-width="1.300"/><g fill="#0a1a7a"><rect x="2.500" y="3" width="2.200" height="2.200"/><rect x="12.500" y="2" width="2.200" height="2.200"/></g><path d="M12.0 8.5l0 8l2-1.800l1.600 3.400l1.400-.7l-1.600-3.300l2.700-.2z" fill="#111"/></g>
<g transform="translate(1343 515)"><path d="M3.500 4.500L16.500 4.500L10 10Z" fill="#e84a4a"/><path d="M3.500 4.500L16.500 4.500L13 7.500L7 7.500Z" fill="#f08a8a"/><path d="M3 8L17 8L10 14Z" fill="#3a6ae8" opacity=".9"/><path d="M4 11.500L16 11.500L10 17.500Z" fill="#8ab8f8" opacity=".9"/></g>
<g transform="translate(1343 541)"><path d="M5 3.500L15.500 3.500L10.500 8Z" fill="#e83a4a"/><path d="M4.500 7L15.500 7L10 12Z" fill="#4a5ae0" opacity=".9"/><path d="M10 7.500L10 11" stroke="#e83a4a" stroke-width="1.500"/><path d="M4 11L16 11L10 17.500Z" fill="#c8b8d8" opacity=".9"/></g>
<g transform="translate(1343 567)"><circle cx="9.500" cy="10" r="7" fill="#2a5ad8"/><path d="M3 8Q6 2.500 12 3.500Q16 5 16.500 9Q10 10 3 8Z" fill="#f8c02a"/><path d="M4 9.500Q9 11 14 9.500L12 12Q8 12.500 4 9.500Z" fill="#e83a2a"/><path d="M12 13.500h5M14.500 11v5" stroke="#fff" stroke-width="1.600"/></g>
<g transform="translate(1343 593)"><path d="M3 17L8 9L17.500 4L17.500 17Z" fill="#1a5ae0"/><path d="M3 17L17.500 10L17.500 17Z" fill="#6ab0f4"/><path d="M5.500 12.500L13 4.500L17 7.500L9.500 15Z" fill="#e8303a"/><path d="M3 3.500L7 6.500" stroke="#333" stroke-width="1"/><path d="M7.500 7L5 6.500L6.500 4.800Z" fill="#333"/></g>
</svg>
<svg class="a" style="left:1220px;top:740px" width="90" height="85" viewBox="1220 740 90 85">
<defs><radialGradient id="axg" cx=".4" cy=".35" r=".7"><stop offset="0" stop-color="#c4c4c4"/><stop offset="1" stop-color="#808080"/></radialGradient></defs>
<path d="M1256 779L1266 775L1282 777L1288 789L1286 803L1276 811L1262 809L1253 799L1251 787Z" fill="url(#axg)"/>
<path d="M1261 784L1279 785L1268 799Z" fill="#d6d6d6"/><path d="M1261 784L1268 799L1255 797Z" fill="#9a9a9a" opacity=".6"/>
<path d="M1272.500 761L1276.500 772L1274.500 772L1275.500 783L1269 783L1270.500 772L1268.500 772Z" fill="#5a5aee"/>
<path d="M1238 798.500L1250 792L1250 794.500L1261 792L1261 800L1251 799L1251.500 801.500Z" fill="#f06060"/>
<path d="M1291 810L1281.500 807.500L1283 805.500L1273.500 799.500L1277 794.500L1285.500 801.500L1287 799.500Z" fill="#40d850"/>
<text x="1268" y="760" font-family="Liberation Sans,sans-serif" font-size="13" font-weight="bold" fill="#1010a0">Z</text>
<text x="1228" y="803" font-family="Liberation Sans,sans-serif" font-size="13" font-weight="bold" fill="#d01010">X</text>
<text x="1288" y="816" font-family="Liberation Sans,sans-serif" font-size="13" font-weight="bold" fill="#10a010">Y</text>
</svg>
<!-- status bar -->
<div class="a" style="left:6.800px;top:855.600px;width:1362.900px;height:25.700px;background:linear-gradient(#484a52,#3a3c43 40%,#2f3035)"></div>
<div class="a" style="left:1215px;top:859px;width:150px;height:17.500px;border:1px solid #f2f2f2;border-radius:2px;background:linear-gradient(#dcdcdc,#c4c4c4 45%,#b4b4b4 50%,#c6c6c6)"></div>
<!-- text layer -->
<div class="t" style="left:297.60px;top:7.64px;color:#0c0c0c;transform:scaleX(0.9799)">Geomagic Studio 2013 -- Kolb - Geomagic - Scans-Polys-Surfaces.wrp</div>
<div class="t" style="left:803.60px;top:7.84px;color:#0c0c0c;transform:scaleX(0.9055)">Active</div>
<div class="t" style="left:68.35px;top:35.34px;color:#fff;transform:scaleX(0.8664)">View</div>
<div class="t" style="left:120.85px;top:35.34px;color:#fff;transform:scaleX(0.8798)">Select</div>
<div class="t" style="left:179.60px;top:35.34px;color:#fff;transform:scaleX(0.9584)">Tools</div>
<div class="t" style="left:235.85px;top:35.34px;color:#fff;transform:scaleX(0.9480)">Alignment</div>
<div class="t" style="left:316.30px;top:35.34px;color:#fff;transform:scaleX(0.8750)">Analysis</div>
<div class="t" style="left:384.85px;top:35.34px;color:#fff;transform:scaleX(0.8731)">Features</div>
<div class="t" style="left:455.60px;top:35.34px;color:#fff;transform:scaleX(0.9156)">Capture</div>
<div class="t" style="left:524.10px;top:35.34px;color:#fff;transform:scaleX(0.8707)">Curves</div>
<div class="t" style="left:586.85px;top:35.34px;color:#fff;transform:scaleX(0.8500)">Exact Surfaces</div>
<div class="t" style="left:685.60px;top:35.34px;color:#fff;transform:scaleX(0.8758)">Parametric Surfaces</div>
<div class="t" style="left:810.85px;top:35.34px;color:#1a1a1a;transform:scaleX(0.8932)">Polygons</div>
<div class="t" style="left:197.10px;top:129.04px;color:#fff;transform:scaleX(0.8795)">Repair</div>
<div class="t" style="left:451.60px;top:129.04px;color:#fff;transform:scaleX(0.9333)">Smooth</div>
<div class="t" style="left:619.35px;top:129.04px;color:#fff;transform:scaleX(0.8937)">Fill Holes</div>
<div class="t" style="left:802.10px;top:129.04px;color:#fff;transform:scaleX(0.9182)">Combine</div>
<div class="t" style="left:934.35px;top:129.04px;color:#fff;transform:scaleX(0.9309)">Offset</div>
<div class="t" style="left:1043.35px;top:129.04px;color:#fff;transform:scaleX(0.8992)">Boundaries</div>
<div class="t" style="left:1147.85px;top:129.04px;color:#fff;transform:scaleX(0.9057)">Sharpening</div>
<div class="t" style="left:1244.10px;top:129.04px;color:#fff;transform:scaleX(0.9243)">Convert</div>
<div class="t" style="left:1308.35px;top:129.04px;color:#fff;transform:scaleX(0.9742)">Output</div>
<div class="t" style="left:26.00px;top:98.84px;color:#9da0a3;transform:scaleX(0.9081)">Delete</div>
<div class="t" style="left:74.60px;top:98.84px;color:#3a3a3a;transform:scaleX(0.9150)">Mesh</div>
<div class="t" style="left:70.10px;top:111.14px;color:#3a3a3a;transform:scaleX(0.9365)">Doctor</div>
<div class="t" style="left:119.40px;top:98.84px;color:#3a3a3a;transform:scaleX(0.8917)">Decimate</div>
<div class="t" style="left:177.60px;top:97.84px;color:#3a3a3a;transform:scaleX(0.9386)">Trim</div>
<div class="t" style="left:214.10px;top:97.84px;color:#3a3a3a;transform:scaleX(0.9502)">Manifold</div>
<div class="t" style="left:271.35px;top:98.84px;color:#9da0a3;transform:scaleX(0.9032)">Defeature</div>
<div class="t" style="left:330.30px;top:97.84px;color:#3a3a3a;transform:scaleX(0.8481)">Remesh</div>
<div class="t" style="left:420.50px;top:98.84px;color:#3a3a3a;transform:scaleX(0.8244)">Relax</div>
<div class="t" style="left:458.30px;top:98.84px;color:#3a3a3a;transform:scaleX(0.8750)">Remove</div>
<div class="t" style="left:460.80px;top:111.14px;color:#3a3a3a;transform:scaleX(0.8465)">Spikes</div>
<div class="t" style="left:549.10px;top:98.84px;color:#3a3a3a;transform:scaleX(0.8546)">Fill</div>
<div class="t" style="left:548.10px;top:111.14px;color:#3a3a3a;transform:scaleX(0.9817)">All</div>
<div class="t" style="left:589.85px;top:98.84px;color:#3a3a3a;transform:scaleX(0.9362)">Fill</div>
<div class="t" style="left:580.60px;top:111.14px;color:#3a3a3a;transform:scaleX(0.8948)">Single</div>
<div class="t" style="left:713.00px;top:73.14px;color:#9da0a3;transform:scaleX(0.8770)">Show Fill</div>
<div class="t" style="left:777.20px;top:98.84px;color:#9da0a3;transform:scaleX(0.9260)">Merge</div>
<div class="t" style="left:821.10px;top:98.84px;color:#3a3a3a;transform:scaleX(0.8668)">Patch</div>
<div class="t" style="left:892.50px;top:98.84px;color:#3a3a3a;transform:scaleX(0.9053)">Sculpt</div>
<div class="t" style="left:937.30px;top:98.84px;color:#3a3a3a;transform:scaleX(0.8581)">Shell</div>
<div class="t" style="left:973.60px;top:98.84px;color:#3a3a3a;transform:scaleX(0.9309)">Offset</div>
<div class="t" style="left:1026.10px;top:97.84px;color:#3a3a3a;transform:scaleX(0.9648)">Modify</div>
<div class="t" style="left:1070.35px;top:65.14px;color:#3a3a3a;transform:scaleX(0.9186)">Create</div>
<div class="t" style="left:1070.85px;top:87.34px;color:#3a3a3a;transform:scaleX(0.9406)">Move</div>
<div class="t" style="left:1070.85px;top:109.14px;color:#3a3a3a;transform:scaleX(0.8806)">Remove</div>
<div class="t" style="left:1135.35px;top:98.84px;color:#3a3a3a;transform:scaleX(0.9057)">Sharpening</div>
<div class="t" style="left:1144.60px;top:111.14px;color:#3a3a3a;transform:scaleX(0.9265)">Wizard</div>
<div class="t" style="left:1236.60px;top:98.84px;color:#3a3a3a;transform:scaleX(0.9321)">Convert to</div>
<div class="t" style="left:1246.10px;top:111.14px;color:#3a3a3a;transform:scaleX(0.8948)">Points</div>
<div class="t" style="left:1312.60px;top:98.84px;color:#3a3a3a;transform:scaleX(0.8776)">Send</div>
<div class="t" style="left:1314.10px;top:111.14px;color:#3a3a3a;transform:scaleX(1.0325)">To</div>
<div class="t" style="left:15.10px;top:160.84px;color:#1a1a1a;transform:scaleX(1.0205)">Model Manager</div>
<div class="t" style="left:111.60px;top:158.84px;color:#a4a4a4;transform:scaleX(0.9807)">Display</div>
<div class="t" style="left:162.10px;top:158.84px;color:#a4a4a4;transform:scaleX(0.9947)">Dialog</div>
<div class="t" style="left:12.85px;top:183.34px;color:#1a1a1a;transform:scaleX(1.0175)">Model Manager</div>
<div class="t" style="left:58.00px;top:201.84px;color:#111;transform:scaleX(0.8966)">KOLB Scans</div>
<div class="t" style="left:58.00px;top:221.84px;color:#fff;transform:scaleX(0.9742)">Polygons</div>
<div class="t" style="left:58.00px;top:241.84px;color:#111;transform:scaleX(0.9548)">Polygons Low Res</div>
<div class="t" style="left:77.10px;top:261.84px;color:#111;transform:scaleX(0.9354)">Features</div>
<div class="t" style="left:58.00px;top:281.84px;color:#111;transform:scaleX(0.9270)">Surfaces</div>
<div class="t" style="left:58.00px;top:301.84px;color:#111;transform:scaleX(1.0345)">World</div>
<div class="t" style="left:359.85px;top:155.84px;color:#0c0c0c;font-weight:bold;transform:scaleX(0.9485)">Graphics</div>
<div class="t" style="left:427.85px;top:155.84px;color:#1a1a1a;transform:scaleX(0.9985)">Getting Started</div>
<div class="t" style="left:528.10px;top:155.84px;color:#1a1a1a;transform:scaleX(0.9981)">Scripting</div>
<div class="t" style="left:1202.85px;top:33.14px;color:#6e6e6e;font-style:italic;transform:scaleX(0.8243)">Search</div>
<div class="t" style="left:11.20px;top:860.74px;color:#fff;transform:scaleX(1.0026)">Left Button: Mark triangle | Ctrl+Left Button: Unmark triangle | Del: Delete selected triangle(s) | Middle Button: Rotate | Shift+Right Button: Zoom | Alt+Middle Button: Pan</div>
</body></html>
